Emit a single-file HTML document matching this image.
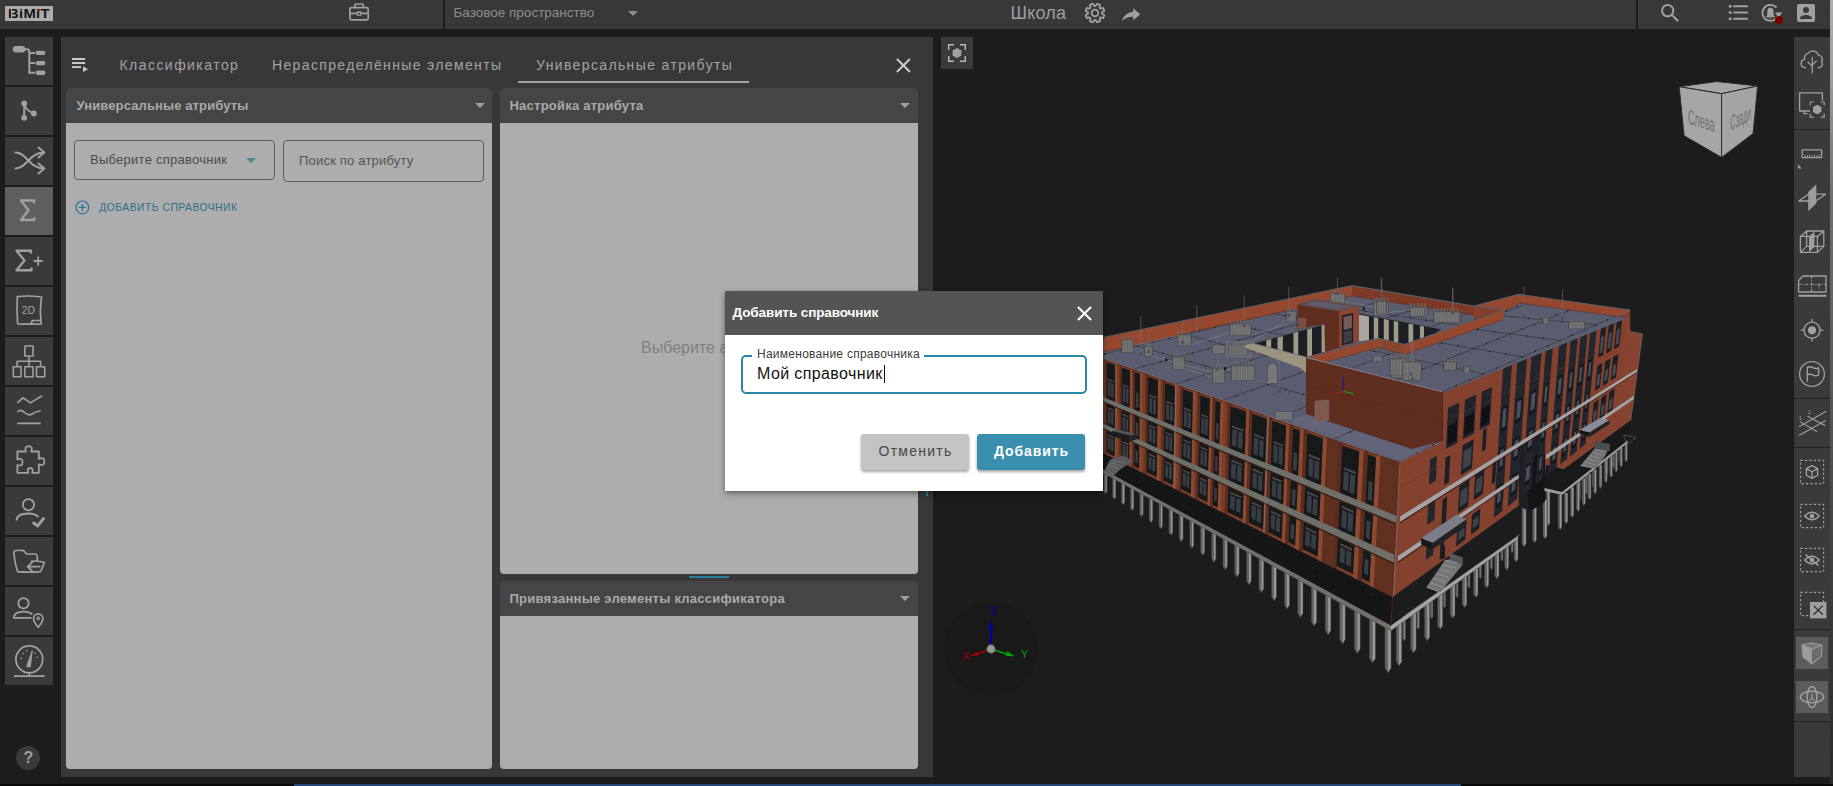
<!DOCTYPE html>
<html lang="ru">
<head>
<meta charset="utf-8">
<title>BIMIT</title>
<style>
html,body{margin:0;padding:0;}
body{width:1833px;height:786px;overflow:hidden;background:#1c1c1c;position:relative;font-family:"Liberation Sans",sans-serif;}
.abs{position:absolute;}
.t{position:absolute;white-space:nowrap;line-height:1;}
#topbar{left:0;top:0;width:1833px;height:29px;background:#383838;}
.vdiv{position:absolute;top:0;width:2px;height:29px;background:#1c1c1c;}
.sb{position:absolute;left:5px;width:48px;height:48px;background:#3a3a3a;}
.sb.act{background:#5f5f5f;}
.sb svg{position:absolute;left:0;top:0;width:48px;height:48px;}
#panel{left:61px;top:37px;width:872px;height:740px;background:#383838;}
.hdr{position:absolute;background:#454545;border-radius:4px 4px 0 0;}
.body{position:absolute;background:#adadad;border-radius:0 0 4px 4px;}
.tab{color:#a2a2a2;font-size:14px;letter-spacing:1.25px;}
.hd{color:#a9a9a9;font-size:13px;font-weight:bold;}
.tri{position:absolute;width:0;height:0;border-left:5px solid transparent;border-right:5px solid transparent;border-top:5px solid #9e9e9e;}
.rb{position:absolute;left:1794px;width:36px;}
</style>
</head>
<body>
<!-- TOPBAR -->
<div id="topbar" class="abs"></div>
<div class="vdiv" style="left:443px"></div>
<div class="vdiv" style="left:1636px"></div>
<div class="abs" id="logo" style="left:5px;top:6px;width:48px;height:15px;background:#ababab;"></div>
<span class="t" id="tx-logo" style="left:8.0px;top:7.55px;font-size:12px;font-weight:bold;color:#151515;letter-spacing:0.2px;transform-origin:0 0;transform:scaleX(1.24);">BiMiT</span>
<div class="abs" style="left:11.1px;top:8.8px;width:0.7px;height:9.2px;background:#ababab;"></div>
<div class="abs" style="left:37.9px;top:9.05px;width:2.2px;height:1.9px;background:#c00000;"></div>
<span class="t" id="tx-space" style="left:453.5px;top:5.7px;font-size:13.5px;color:#8c8c8c;">Базовое пространство</span>
<div class="tri" style="left:628px;top:11px;border-top-color:#8c8c8c;"></div>
<span class="t" id="tx-school" style="left:1010.5px;top:3.5px;font-size:18px;color:#9e9e9e;letter-spacing:0.2px;">Школа</span>

<div id="topicons">
<svg class="abs" style="left:345px;top:0px;width:28px;height:29px;" viewBox="345 0 28 29"><g fill="none" stroke="#a0a0a0" stroke-width="1.7" stroke-linejoin="round"><rect x="349.9" y="7.6" width="18.3" height="12.3" rx="1.6"/><path d="M354.8,7.6V5.6Q354.8,4 356.4,4H361.7Q363.3,4 363.3,5.6V7.6M350,13.4H357.3M360.9,13.4H368.2"/><rect x="357.4" y="12" width="3.4" height="3.2" stroke-width="1.3"/></g></svg>
<svg class="abs" style="left:1083px;top:0px;width:24px;height:29px;" viewBox="1083 0 24 29"><g fill="none" stroke="#a0a0a0" stroke-width="1.8" stroke-linejoin="round"><path d="M1101.97,13.65L1104.36,15.12L1103.12,18.12L1100.39,17.47L1099.47,18.39L1100.12,21.12L1097.12,22.36L1095.65,19.97L1094.35,19.97L1092.88,22.36L1089.88,21.12L1090.53,18.39L1089.61,17.47L1086.88,18.12L1085.64,15.12L1088.03,13.65L1088.03,12.35L1085.64,10.88L1086.88,7.88L1089.61,8.53L1090.53,7.61L1089.88,4.88L1092.88,3.64L1094.35,6.03L1095.65,6.03L1097.12,3.64L1100.12,4.88L1099.47,7.61L1100.39,8.53L1103.12,7.88L1104.36,10.88L1101.97,12.35Z"/><circle cx="1095" cy="13" r="3.3"/></g></svg>
<svg class="abs" style="left:1118.8px;top:4px;width:24.3px;height:20.4px;" viewBox="0 0 24 24" preserveAspectRatio="none"><path fill="#a0a0a0" d="M21,12L14,5V9C7,10 4,15 3,20C5.5,16.5 9,14.9 14,14.9V19L21,12Z"/></svg>
<svg class="abs" style="left:1658px;top:0.9px;width:24.5px;height:24.5px;" viewBox="0 0 24 24"><path fill="#a0a0a0" d="M9.5,3A6.5,6.5 0 0,1 16,9.5C16,11.11 15.41,12.59 14.44,13.73L14.71,14H15.5L20.5,19L19,20.5L14,15.5V14.71L13.73,14.44C12.59,15.41 11.11,16 9.5,16A6.5,6.5 0 0,1 3,9.5A6.5,6.5 0 0,1 9.5,3M9.5,5C7,5 5,7 5,9.5C5,12 7,14 9.5,14C12,14 14,12 14,9.5C14,7 12,5 9.5,5Z"/></svg>
<svg class="abs" style="left:1726px;top:0px;width:25px;height:25px;" viewBox="0 0 24 24"><path fill="#a0a0a0" d="M7,5H21V7H7V5M7,13V11H21V13H7M4,4.5A1.5,1.5 0 0,1 5.5,6A1.5,1.5 0 0,1 4,7.5A1.5,1.5 0 0,1 2.5,6A1.5,1.5 0 0,1 4,4.5M4,10.5A1.5,1.5 0 0,1 5.5,12A1.5,1.5 0 0,1 4,13.5A1.5,1.5 0 0,1 2.5,12A1.5,1.5 0 0,1 4,10.5M7,19V17H21V19H7M4,16.5A1.5,1.5 0 0,1 5.5,18A1.5,1.5 0 0,1 4,19.5A1.5,1.5 0 0,1 2.5,18A1.5,1.5 0 0,1 4,16.5Z"/></svg>
<svg class="abs" style="left:1758px;top:0px;width:30px;height:29px;" viewBox="1758 0 30 29"><g fill="none" stroke="#a0a0a0" stroke-width="1.9"><path d="M1778.3,14.5A8,8 0 1 1 1776.5,7.6"/></g><path fill="#a0a0a0" d="M1775,12.6H1782.4L1778.7,17.2Z"/><path fill="#a0a0a0" d="M1770.4,7.6Q1773.6,8 1773.6,12.2V15.2L1774.8,16.6V17.2H1766V16.6L1767.2,15.2V12.2Q1767.2,8 1770.4,7.6ZM1769.3,18H1771.5Q1771.4,19.1 1770.4,19.1Q1769.4,19.1 1769.3,18Z"/><circle cx="1779" cy="20" r="4" fill="#7b0000"/></svg>
<svg class="abs" style="left:1794px;top:0.8px;width:24px;height:24px;" viewBox="0 0 24 24"><path fill="#a0a0a0" d="M6,17C6,15 10,13.9 12,13.9C14,13.9 18,15 18,17V18H6M15,9A3,3 0 0,1 12,12A3,3 0 0,1 9,9A3,3 0 0,1 12,6A3,3 0 0,1 15,9M3,5V19A2,2 0 0,0 5,21H19A2,2 0 0,0 21,19V5A2,2 0 0,0 19,3H5C3.89,3 3,3.9 3,5Z"/></svg>
</div>
<!-- LEFT SIDEBAR -->
<div id="sidebar">
<div class="sb" style="top:37px"><svg viewBox="0 0 48 48" fill="none" stroke="#a0a0a0" stroke-width="2"><rect x="7.8" y="9" width="12.5" height="6.4" rx="3.2" fill="#a0a0a0" stroke="none"/><path d="M19,12.2H21.8Q24.3,12.2 24.3,14.7V35.7H30M24.3,15.9H30M24.3,26.1H30"/><rect x="30.6" y="13.7" width="9.8" height="4.4" rx="2.2" fill="#a0a0a0" stroke="none"/><rect x="30.6" y="23.9" width="9.8" height="4.4" rx="2.2" fill="#a0a0a0" stroke="none"/><rect x="30.6" y="33.5" width="9.8" height="4.4" rx="2.2" fill="#a0a0a0" stroke="none"/></svg></div>
<div class="sb" style="top:87px"><svg viewBox="0 0 48 48" fill="none" stroke="#a0a0a0" stroke-width="2"><path d="M19.2,16.3V30.8M19.2,16.5Q20,23 28.8,26.5"/><circle cx="19.2" cy="16.3" r="2.9" fill="#a0a0a0" stroke="none"/><circle cx="19.2" cy="30.8" r="2.9" fill="#a0a0a0" stroke="none"/><circle cx="28.8" cy="26.5" r="2.9" fill="#a0a0a0" stroke="none"/></svg></div>
<div class="sb" style="top:137px"><svg viewBox="0 0 48 48" fill="none" stroke="#a0a0a0" stroke-width="2"><path d="M10.5,15.5C22,15.5 24,31.5 39,31.5M10.5,31.5C22,31.5 24,15.5 39,15.5M33.5,10.5L39.3,15.5L33.5,20.5M33.5,26.5L39.3,31.5L33.5,36.5" stroke-linecap="round" stroke-linejoin="round"/></svg></div>
<div class="sb act" style="top:187px"><svg viewBox="0 0 48 48" fill="none" stroke="#a0a0a0" stroke-width="2"><path d="M29,15.5V13.5H16L23.5,23.2L16,33H29.3V31" stroke-width="2.4" stroke-linejoin="round" stroke-linecap="round"/></svg></div>
<div class="sb" style="top:237px"><svg viewBox="0 0 48 48" fill="none" stroke="#a0a0a0" stroke-width="2"><path d="M26,15.5V13.8H11.5L19.5,23.5L11.5,33.2H26.5V31.5" stroke-width="2.4" stroke-linejoin="round" stroke-linecap="round"/><path d="M33.2,19.5V28.5M28.7,24H37.7" stroke-width="1.8"/></svg></div>
<div class="sb" style="top:287px"><svg viewBox="0 0 48 48" fill="none" stroke="#a0a0a0" stroke-width="2"><path d="M12.3,9.6Q24,8.2 36.6,10Q34.5,24 36.3,36.8Q24,37.6 12.6,36.8Q11.6,23 12.3,9.6ZM26,36.5L27.5,33.5H35.5" stroke-width="1.7" stroke-linejoin="round"/><text x="23.3" y="27.2" font-size="10.4" text-anchor="middle" fill="#a0a0a0" stroke="none" font-family="Liberation Sans,sans-serif">2D</text></svg></div>
<div class="sb" style="top:337px"><svg viewBox="0 0 48 48" fill="none" stroke="#a0a0a0" stroke-width="2"><path d="M19.9,9H28V19H19.9ZM8.3,29.8H16V39.8H8.3ZM19.9,29.8H28V39.8H19.9ZM31.5,29.8H39.7V39.8H31.5ZM24,19V29.8M12.1,29.8V24.3H35.6V29.8" stroke-width="1.6" stroke-linejoin="round"/></svg></div>
<div class="sb" style="top:387px"><svg viewBox="0 0 48 48" fill="none" stroke="#a0a0a0" stroke-width="2"><path d="M12.3,15.9L17.9,10.8L25.5,15.9L37,8.8M12.3,24.8Q15,22.3 18,24.3Q24,29.3 27,27Q31,24.3 35.7,24M12.3,36.3H35.7" stroke-width="1.7" stroke-linejoin="round"/></svg></div>
<div class="sb" style="top:437px"><svg viewBox="0 0 48 48" fill="none" stroke="#a0a0a0" stroke-width="2"><path d="M21,14.5Q18.8,9.3 23.6,9.2Q28.4,9.3 26.2,14.5H33.8V21.8Q39.4,19.6 39.4,24.6Q39.4,29.6 33.8,27.4V35.8H27.2Q28.8,31 25.2,31Q21.6,31 23.2,35.8H12.4V28Q17.6,30 17.6,25Q17.6,20.4 12.4,22.4V14.5Z" stroke-width="1.8" stroke-linejoin="round"/></svg></div>
<div class="sb" style="top:487px"><svg viewBox="0 0 48 48" fill="none" stroke="#a0a0a0" stroke-width="2"><circle cx="23.5" cy="17.7" r="5.6" stroke-width="1.8"/><path d="M11.5,33.5Q11.8,26.5 23.5,26.5Q30,26.5 33.5,30" stroke-width="1.8"/><path d="M27.8,35.3L32.6,39L39.3,30.6" stroke-width="3" stroke-linejoin="miter"/></svg></div>
<div class="sb" style="top:537px"><svg viewBox="0 0 48 48" fill="none" stroke="#a0a0a0" stroke-width="2"><path d="M8.8,14.2Q13,12.7 18.5,13.6L21.5,17H30.5Q32,17.3 32.3,19.5V24.5M8.8,14.2Q9.5,26 12.8,34.6Q22,35.6 35.5,34.6Q38,30 39.3,25.6Q34,23.3 26,24.3" stroke-width="1.7" stroke-linejoin="round"/><path d="M35.5,29.7H23M27.5,25L22.7,29.7L27.5,34.4" stroke-width="1.8"/></svg></div>
<div class="sb" style="top:587px"><svg viewBox="0 0 48 48" fill="none" stroke="#a0a0a0" stroke-width="2"><circle cx="18.5" cy="16.3" r="5.2" stroke-width="1.8"/><path d="M8.6,31.5Q8.6,24.6 18.5,24.6Q24.5,24.6 27.3,27.4M8.6,30.8H26.5" stroke-width="1.8"/><path d="M33.2,40.3Q28.6,35 28.6,31.4A4.6,4.6 0 0 1 37.8,31.4Q37.8,35 33.2,40.3Z" stroke-width="1.7" stroke-linejoin="round"/><circle cx="33.2" cy="31.4" r="1.2" stroke-width="1.2"/></svg></div>
<div class="sb" style="top:637px"><svg viewBox="0 0 48 48" fill="none" stroke="#a0a0a0" stroke-width="2"><circle cx="24.3" cy="22.3" r="13.4" stroke-width="1.8"/><path d="M9,39.2H39.6M24.3,35.7V39" stroke-width="1.8"/><path d="M21.6,29.6L27.2,13.8L25.3,30Z" fill="#a0a0a0" stroke-width="1" stroke-linejoin="round"/><path d="M15.3,21L17,21.6M17.5,16L18.8,17M21.5,13L22,14.5M30.5,15.5L29.5,16.6M33,20L31.6,20.6" stroke-width="1.2"/></svg></div>
<div class="abs" style="left:16px;top:746px;width:24px;height:24px;border-radius:12px;background:#3a3a3a;"></div><span class="t" id="tx-help" style="left:23.4px;top:749.6px;font-size:16px;font-weight:bold;color:#a0a0a0;">?</span>
</div>

<!-- MAIN PANEL -->
<div id="panel" class="abs"></div>
<span class="t tab" id="tx-tab1" style="left:119.5px;top:58px;letter-spacing:1.45px;">Классификатор</span>
<span class="t tab" id="tx-tab2" style="left:272px;top:58px;letter-spacing:1.36px;">Нераспределённые элементы</span>
<span class="t tab" id="tx-tab3" style="left:536px;top:58px;letter-spacing:1.37px;">Универсальные атрибуты</span>
<div class="abs" style="left:518px;top:81px;width:231px;height:2px;background:#a2a2a2;"></div>

<!-- left sub-panel -->
<div class="hdr" style="left:66px;top:88px;width:426px;height:35px;"></div>
<div class="body" style="left:66px;top:123px;width:426px;height:646px;"></div>
<span class="t hd" id="tx-h1" style="left:76.5px;top:99px;letter-spacing:0.12px;">Универсальные атрибуты</span>
<div class="tri" style="left:475px;top:103px;"></div>
<div class="abs" style="left:74px;top:140px;width:199px;height:38px;border:1px solid #5e5e5e;border-radius:4px;"></div>
<div class="abs" style="left:283px;top:140px;width:199px;height:40px;border:1px solid #5e5e5e;border-radius:4px;"></div>
<span class="t" id="tx-sel" style="left:90px;top:153px;font-size:13px;color:#4c4c4c;letter-spacing:0.26px;">Выберите справочник</span>
<div class="tri" style="left:246px;top:158px;border-top-color:#4d8799;"></div>
<span class="t" id="tx-srch" style="left:299px;top:154px;font-size:13px;color:#555;letter-spacing:0.2px;">Поиск по атрибуту</span>
<span class="t" id="tx-add" style="left:99.2px;top:203px;font-size:10.3px;color:#2f6f88;letter-spacing:0.52px;">ДОБАВИТЬ СПРАВОЧНИК</span>

<!-- right sub-panels -->
<div class="hdr" style="left:500px;top:88px;width:418px;height:35px;"></div>
<div class="body" style="left:500px;top:123px;width:418px;height:451px;"></div>
<span class="t hd" id="tx-h2" style="left:509.5px;top:99px;letter-spacing:0.23px;">Настройка атрибута</span>
<div class="tri" style="left:900px;top:103px;"></div>
<span class="t" id="tx-pick" style="left:641px;top:340px;font-size:16px;color:#808080;">Выберите атрибут</span>
<div class="abs" style="left:689px;top:576px;width:40px;height:2px;background:#2a7f9c;"></div>
<div class="hdr" style="left:500px;top:581px;width:418px;height:35px;"></div>
<div class="body" style="left:500px;top:616px;width:418px;height:153px;"></div>
<span class="t hd" id="tx-h3" style="left:509.5px;top:591.6px;letter-spacing:0.25px;">Привязанные элементы классификатора</span>
<div class="tri" style="left:900px;top:596px;"></div>

<div id="panelicons">
<svg class="abs" style="left:70px;top:55px;width:20px;height:20px;" viewBox="70 55 20 20"><g fill="#c6c6c6"><rect x="72" y="58" width="13.1" height="2"/><rect x="72" y="62" width="13.1" height="2"/><rect x="72" y="66.1" width="9" height="1.9"/><path d="M83,66.2L88.1,69.2L83,72.1Z"/></g></svg>
<svg class="abs" style="left:891.2px;top:53.0px;width:24.8px;height:24.8px;" viewBox="0 0 24 24"><path fill="#cfcfcf" d="M19,6.41L17.59,5L12,10.59L6.41,5L5,6.41L10.59,12L5,17.59L6.41,19L12,13.41L17.59,19L19,17.59L13.41,12L19,6.41Z"/></svg>
<svg class="abs" style="left:73.6px;top:199.3px;width:16.8px;height:16.8px;" viewBox="0 0 24 24"><path fill="#2f7a96" d="M12,20C7.59,20 4,16.41 4,12C4,7.59 7.59,4 12,4C16.41,4 20,7.59 20,12C20,16.41 16.41,20 12,20M12,2A10,10 0 0,0 2,12A10,10 0 0,0 12,22A10,10 0 0,0 22,12A10,10 0 0,0 12,2M13,7H11V11H7V13H11V17H13V13H17V11H13V7Z"/></svg>
</div>
<!-- VIEWPORT -->
<div id="viewport">
<!--BUILDING--><svg class="abs" style="left:934px;top:29px;width:860px;height:751px" viewBox="934 29 860 751">
<path d="M1402.5,616.0V638.6L1404.0,641.0V616.0Z" fill="#5d5e5b"/>
<path d="M1405.5,616.0V638.6L1404.0,641.0V616.0Z" fill="#848583"/>
<path d="M1402.5,616.0V638.6L1404.0,641.0L1405.5,638.6V616.0" fill="none" stroke="#3a3b39" stroke-width="0.5"/>
<path d="M1416.5,605.6V627.3L1418.0,629.6V605.6Z" fill="#5d5e5b"/>
<path d="M1419.4,605.6V627.3L1418.0,629.6V605.6Z" fill="#848583"/>
<path d="M1416.5,605.6V627.3L1418.0,629.6L1419.4,627.3V605.6" fill="none" stroke="#3a3b39" stroke-width="0.5"/>
<path d="M1430.0,595.7V616.4L1431.4,618.6V595.7Z" fill="#5d5e5b"/>
<path d="M1432.9,595.7V616.4L1431.4,618.6V595.7Z" fill="#848583"/>
<path d="M1430.0,595.7V616.4L1431.4,618.6L1432.9,616.4V595.7" fill="none" stroke="#3a3b39" stroke-width="0.5"/>
<path d="M1443.0,586.1V605.9L1444.4,608.1V586.1Z" fill="#5d5e5b"/>
<path d="M1445.7,586.1V605.9L1444.4,608.1V586.1Z" fill="#848583"/>
<path d="M1443.0,586.1V605.9L1444.4,608.1L1445.7,605.9V586.1" fill="none" stroke="#3a3b39" stroke-width="0.5"/>
<path d="M1455.4,576.9V595.8L1456.8,598.0V576.9Z" fill="#5d5e5b"/>
<path d="M1458.1,576.9V595.8L1456.8,598.0V576.9Z" fill="#848583"/>
<path d="M1455.4,576.9V595.8L1456.8,598.0L1458.1,595.8V576.9" fill="none" stroke="#3a3b39" stroke-width="0.5"/>
<path d="M1467.4,568.1V586.2L1468.7,588.3V568.1Z" fill="#5d5e5b"/>
<path d="M1470.0,568.1V586.2L1468.7,588.3V568.1Z" fill="#848583"/>
<path d="M1467.4,568.1V586.2L1468.7,588.3L1470.0,586.2V568.1" fill="none" stroke="#3a3b39" stroke-width="0.5"/>
<path d="M1478.9,559.6V576.9L1480.2,578.9V559.6Z" fill="#5d5e5b"/>
<path d="M1481.5,559.6V576.9L1480.2,578.9V559.6Z" fill="#848583"/>
<path d="M1478.9,559.6V576.9L1480.2,578.9L1481.5,576.9V559.6" fill="none" stroke="#3a3b39" stroke-width="0.5"/>
<path d="M1490.0,551.4V567.9L1491.2,569.9V551.4Z" fill="#5d5e5b"/>
<path d="M1492.5,551.4V567.9L1491.2,569.9V551.4Z" fill="#848583"/>
<path d="M1490.0,551.4V567.9L1491.2,569.9L1492.5,567.9V551.4" fill="none" stroke="#3a3b39" stroke-width="0.5"/>
<path d="M1500.6,543.5V559.3L1501.8,561.3V543.5Z" fill="#5d5e5b"/>
<path d="M1503.0,543.5V559.3L1501.8,561.3V543.5Z" fill="#848583"/>
<path d="M1500.6,543.5V559.3L1501.8,561.3L1503.0,559.3V543.5" fill="none" stroke="#3a3b39" stroke-width="0.5"/>
<path d="M1510.8,536.0V551.1L1512.0,553.0V536.0Z" fill="#5d5e5b"/>
<path d="M1513.2,536.0V551.1L1512.0,553.0V536.0Z" fill="#848583"/>
<path d="M1510.8,536.0V551.1L1512.0,553.0L1513.2,551.1V536.0" fill="none" stroke="#3a3b39" stroke-width="0.5"/>
<path d="M1396.2,623.0V661.5L1399.0,666.0V623.0Z" fill="#646561"/>
<path d="M1401.8,623.0V661.5L1399.0,666.0V623.0Z" fill="#989997"/>
<path d="M1396.2,623.0V661.5L1399.0,666.0L1401.8,661.5V623.0" fill="none" stroke="#3a3b39" stroke-width="0.5"/>
<path d="M1410.7,612.1V648.9L1413.4,653.2V612.1Z" fill="#646561"/>
<path d="M1416.1,612.1V648.9L1413.4,653.2V612.1Z" fill="#989997"/>
<path d="M1410.7,612.1V648.9L1413.4,653.2L1416.1,648.9V612.1" fill="none" stroke="#3a3b39" stroke-width="0.5"/>
<path d="M1424.5,601.6V636.9L1427.1,641.0V601.6Z" fill="#646561"/>
<path d="M1429.7,601.6V636.9L1427.1,641.0V601.6Z" fill="#989997"/>
<path d="M1424.5,601.6V636.9L1427.1,641.0L1429.7,636.9V601.6" fill="none" stroke="#3a3b39" stroke-width="0.5"/>
<path d="M1437.6,591.7V625.4L1440.1,629.4V591.7Z" fill="#646561"/>
<path d="M1442.7,591.7V625.4L1440.1,629.4V591.7Z" fill="#989997"/>
<path d="M1437.6,591.7V625.4L1440.1,629.4L1442.7,625.4V591.7" fill="none" stroke="#3a3b39" stroke-width="0.5"/>
<path d="M1450.2,582.2V614.5L1452.6,618.4V582.2Z" fill="#646561"/>
<path d="M1455.0,582.2V614.5L1452.6,618.4V582.2Z" fill="#989997"/>
<path d="M1450.2,582.2V614.5L1452.6,618.4L1455.0,614.5V582.2" fill="none" stroke="#3a3b39" stroke-width="0.5"/>
<path d="M1462.1,573.2V604.1L1464.5,607.8V573.2Z" fill="#646561"/>
<path d="M1466.8,573.2V604.1L1464.5,607.8V573.2Z" fill="#989997"/>
<path d="M1462.1,573.2V604.1L1464.5,607.8L1466.8,604.1V573.2" fill="none" stroke="#3a3b39" stroke-width="0.5"/>
<path d="M1473.5,564.6V594.1L1475.8,597.8V564.6Z" fill="#646561"/>
<path d="M1478.0,564.6V594.1L1475.8,597.8V564.6Z" fill="#989997"/>
<path d="M1473.5,564.6V594.1L1475.8,597.8L1478.0,594.1V564.6" fill="none" stroke="#3a3b39" stroke-width="0.5"/>
<path d="M1484.4,556.4V584.6L1486.6,588.2V556.4Z" fill="#646561"/>
<path d="M1488.8,556.4V584.6L1486.6,588.2V556.4Z" fill="#989997"/>
<path d="M1484.4,556.4V584.6L1486.6,588.2L1488.8,584.6V556.4" fill="none" stroke="#3a3b39" stroke-width="0.5"/>
<path d="M1494.7,548.6V575.6L1496.8,579.0V548.6Z" fill="#646561"/>
<path d="M1499.0,548.6V575.6L1496.8,579.0V548.6Z" fill="#989997"/>
<path d="M1494.7,548.6V575.6L1496.8,579.0L1499.0,575.6V548.6" fill="none" stroke="#3a3b39" stroke-width="0.5"/>
<path d="M1504.6,541.1V567.0L1506.7,570.3V541.1Z" fill="#646561"/>
<path d="M1508.7,541.1V567.0L1506.7,570.3V541.1Z" fill="#989997"/>
<path d="M1504.6,541.1V567.0L1506.7,570.3L1508.7,567.0V541.1" fill="none" stroke="#3a3b39" stroke-width="0.5"/>
<path d="M1514.0,534.0V558.8L1516.0,562.0V534.0Z" fill="#646561"/>
<path d="M1518.0,534.0V558.8L1516.0,562.0V534.0Z" fill="#989997"/>
<path d="M1514.0,534.0V558.8L1516.0,562.0L1518.0,558.8V534.0" fill="none" stroke="#3a3b39" stroke-width="0.5"/>
<path d="M1570.7,485.0V505.9L1572.0,508.0V485.0Z" fill="#5d5e5b"/>
<path d="M1573.3,485.0V505.9L1572.0,508.0V485.0Z" fill="#848583"/>
<path d="M1570.7,485.0V505.9L1572.0,508.0L1573.3,505.9V485.0" fill="none" stroke="#3a3b39" stroke-width="0.5"/>
<path d="M1578.0,479.2V499.0L1579.2,501.0V479.2Z" fill="#5d5e5b"/>
<path d="M1580.5,479.2V499.0L1579.2,501.0V479.2Z" fill="#848583"/>
<path d="M1578.0,479.2V499.0L1579.2,501.0L1580.5,499.0V479.2" fill="none" stroke="#3a3b39" stroke-width="0.5"/>
<path d="M1585.1,473.6V492.2L1586.3,494.2V473.6Z" fill="#5d5e5b"/>
<path d="M1587.6,473.6V492.2L1586.3,494.2V473.6Z" fill="#848583"/>
<path d="M1585.1,473.6V492.2L1586.3,494.2L1587.6,492.2V473.6" fill="none" stroke="#3a3b39" stroke-width="0.5"/>
<path d="M1592.1,468.1V485.6L1593.3,487.5V468.1Z" fill="#5d5e5b"/>
<path d="M1594.5,468.1V485.6L1593.3,487.5V468.1Z" fill="#848583"/>
<path d="M1592.1,468.1V485.6L1593.3,487.5L1594.5,485.6V468.1" fill="none" stroke="#3a3b39" stroke-width="0.5"/>
<path d="M1599.0,462.6V479.1L1600.1,480.9V462.6Z" fill="#5d5e5b"/>
<path d="M1601.2,462.6V479.1L1600.1,480.9V462.6Z" fill="#848583"/>
<path d="M1599.0,462.6V479.1L1600.1,480.9L1601.2,479.1V462.6" fill="none" stroke="#3a3b39" stroke-width="0.5"/>
<path d="M1605.7,457.3V472.7L1606.8,474.5V457.3Z" fill="#5d5e5b"/>
<path d="M1607.9,457.3V472.7L1606.8,474.5V457.3Z" fill="#848583"/>
<path d="M1605.7,457.3V472.7L1606.8,474.5L1607.9,472.7V457.3" fill="none" stroke="#3a3b39" stroke-width="0.5"/>
<path d="M1612.2,452.1V466.5L1613.3,468.2V452.1Z" fill="#5d5e5b"/>
<path d="M1614.4,452.1V466.5L1613.3,468.2V452.1Z" fill="#848583"/>
<path d="M1612.2,452.1V466.5L1613.3,468.2L1614.4,466.5V452.1" fill="none" stroke="#3a3b39" stroke-width="0.5"/>
<path d="M1618.7,447.0V460.4L1619.7,462.0V447.0Z" fill="#5d5e5b"/>
<path d="M1620.8,447.0V460.4L1619.7,462.0V447.0Z" fill="#848583"/>
<path d="M1618.7,447.0V460.4L1619.7,462.0L1620.8,460.4V447.0" fill="none" stroke="#3a3b39" stroke-width="0.5"/>
<path d="M1625.0,442.0V454.4L1626.0,456.0V442.0Z" fill="#5d5e5b"/>
<path d="M1627.0,442.0V454.4L1626.0,456.0V442.0Z" fill="#848583"/>
<path d="M1625.0,442.0V454.4L1626.0,456.0L1627.0,454.4V442.0" fill="none" stroke="#3a3b39" stroke-width="0.5"/>
<path d="M1564.2,493.0V521.1L1566.0,524.0V493.0Z" fill="#646561"/>
<path d="M1567.8,493.0V521.1L1566.0,524.0V493.0Z" fill="#989997"/>
<path d="M1564.2,493.0V521.1L1566.0,524.0L1567.8,521.1V493.0" fill="none" stroke="#3a3b39" stroke-width="0.5"/>
<path d="M1570.3,488.1V515.0L1572.0,517.8V488.1Z" fill="#646561"/>
<path d="M1573.8,488.1V515.0L1572.0,517.8V488.1Z" fill="#989997"/>
<path d="M1570.3,488.1V515.0L1572.0,517.8L1573.8,515.0V488.1" fill="none" stroke="#3a3b39" stroke-width="0.5"/>
<path d="M1576.2,483.3V509.0L1577.9,511.7V483.3Z" fill="#646561"/>
<path d="M1579.6,483.3V509.0L1577.9,511.7V483.3Z" fill="#989997"/>
<path d="M1576.2,483.3V509.0L1577.9,511.7L1579.6,509.0V483.3" fill="none" stroke="#3a3b39" stroke-width="0.5"/>
<path d="M1582.1,478.5V503.1L1583.7,505.7V478.5Z" fill="#646561"/>
<path d="M1585.4,478.5V503.1L1583.7,505.7V478.5Z" fill="#989997"/>
<path d="M1582.1,478.5V503.1L1583.7,505.7L1585.4,503.1V478.5" fill="none" stroke="#3a3b39" stroke-width="0.5"/>
<path d="M1587.8,473.9V497.3L1589.4,499.8V473.9Z" fill="#646561"/>
<path d="M1591.0,473.9V497.3L1589.4,499.8V473.9Z" fill="#989997"/>
<path d="M1587.8,473.9V497.3L1589.4,499.8L1591.0,497.3V473.9" fill="none" stroke="#3a3b39" stroke-width="0.5"/>
<path d="M1593.4,469.4V491.6L1594.9,494.1V469.4Z" fill="#646561"/>
<path d="M1596.5,469.4V491.6L1594.9,494.1V469.4Z" fill="#989997"/>
<path d="M1593.4,469.4V491.6L1594.9,494.1L1596.5,491.6V469.4" fill="none" stroke="#3a3b39" stroke-width="0.5"/>
<path d="M1598.9,464.9V486.1L1600.4,488.5V464.9Z" fill="#646561"/>
<path d="M1601.9,464.9V486.1L1600.4,488.5V464.9Z" fill="#989997"/>
<path d="M1598.9,464.9V486.1L1600.4,488.5L1601.9,486.1V464.9" fill="none" stroke="#3a3b39" stroke-width="0.5"/>
<path d="M1604.2,460.6V480.6L1605.7,483.0V460.6Z" fill="#646561"/>
<path d="M1607.2,460.6V480.6L1605.7,483.0V460.6Z" fill="#989997"/>
<path d="M1604.2,460.6V480.6L1605.7,483.0L1607.2,480.6V460.6" fill="none" stroke="#3a3b39" stroke-width="0.5"/>
<path d="M1609.5,456.3V475.3L1610.9,477.6V456.3Z" fill="#646561"/>
<path d="M1612.4,456.3V475.3L1610.9,477.6V456.3Z" fill="#989997"/>
<path d="M1609.5,456.3V475.3L1610.9,477.6L1612.4,475.3V456.3" fill="none" stroke="#3a3b39" stroke-width="0.5"/>
<path d="M1614.7,452.1V470.1L1616.1,472.3V452.1Z" fill="#646561"/>
<path d="M1617.4,452.1V470.1L1616.1,472.3V452.1Z" fill="#989997"/>
<path d="M1614.7,452.1V470.1L1616.1,472.3L1617.4,470.1V452.1" fill="none" stroke="#3a3b39" stroke-width="0.5"/>
<path d="M1619.7,448.0V464.9L1621.1,467.1V448.0Z" fill="#646561"/>
<path d="M1622.4,448.0V464.9L1621.1,467.1V448.0Z" fill="#989997"/>
<path d="M1619.7,448.0V464.9L1621.1,467.1L1622.4,464.9V448.0" fill="none" stroke="#3a3b39" stroke-width="0.5"/>
<path d="M1624.7,444.0V459.9L1626.0,462.0V444.0Z" fill="#646561"/>
<path d="M1627.3,444.0V459.9L1626.0,462.0V444.0Z" fill="#989997"/>
<path d="M1624.7,444.0V459.9L1626.0,462.0L1627.3,459.9V444.0" fill="none" stroke="#3a3b39" stroke-width="0.5"/>
<path d="M1546.1,491.0V523.0L1548.0,526.0V491.0Z" fill="#646561"/>
<path d="M1549.9,491.0V523.0L1548.0,526.0V491.0Z" fill="#989997"/>
<path d="M1546.1,491.0V523.0L1548.0,526.0L1549.9,523.0V491.0" fill="none" stroke="#3a3b39" stroke-width="0.5"/>
<path d="M1558.1,495.0V527.0L1560.0,530.0V495.0Z" fill="#646561"/>
<path d="M1561.9,495.0V527.0L1560.0,530.0V495.0Z" fill="#989997"/>
<path d="M1558.1,495.0V527.0L1560.0,530.0L1561.9,527.0V495.0" fill="none" stroke="#3a3b39" stroke-width="0.5"/>
<path d="M1521.9,506.0V543.6L1524.0,547.0V506.0Z" fill="#646561"/>
<path d="M1526.1,506.0V543.6L1524.0,547.0V506.0Z" fill="#989997"/>
<path d="M1521.9,506.0V543.6L1524.0,547.0L1526.1,543.6V506.0" fill="none" stroke="#3a3b39" stroke-width="0.5"/>
<path d="M1532.5,503.0V539.7L1534.5,543.0V503.0Z" fill="#646561"/>
<path d="M1536.5,503.0V539.7L1534.5,543.0V503.0Z" fill="#989997"/>
<path d="M1532.5,503.0V539.7L1534.5,543.0L1536.5,539.7V503.0" fill="none" stroke="#3a3b39" stroke-width="0.5"/>
<path d="M1543.0,500.0V535.8L1545.0,539.0V500.0Z" fill="#646561"/>
<path d="M1547.0,500.0V535.8L1545.0,539.0V500.0Z" fill="#989997"/>
<path d="M1543.0,500.0V535.8L1545.0,539.0L1547.0,535.8V500.0" fill="none" stroke="#3a3b39" stroke-width="0.5"/>
<path d="M1103.9,472.0V491.4L1105.5,494.0V472.0Z" fill="#646561"/>
<path d="M1107.1,472.0V491.4L1105.5,494.0V472.0Z" fill="#989997"/>
<path d="M1103.9,472.0V491.4L1105.5,494.0L1107.1,491.4V472.0" fill="none" stroke="#3a3b39" stroke-width="0.5"/>
<path d="M1112.5,476.7V496.8L1114.1,499.5V476.7Z" fill="#646561"/>
<path d="M1115.8,476.7V496.8L1114.1,499.5V476.7Z" fill="#989997"/>
<path d="M1112.5,476.7V496.8L1114.1,499.5L1115.8,496.8V476.7" fill="none" stroke="#3a3b39" stroke-width="0.5"/>
<path d="M1121.3,481.6V502.4L1123.0,505.1V481.6Z" fill="#646561"/>
<path d="M1124.7,481.6V502.4L1123.0,505.1V481.6Z" fill="#989997"/>
<path d="M1121.3,481.6V502.4L1123.0,505.1L1124.7,502.4V481.6" fill="none" stroke="#3a3b39" stroke-width="0.5"/>
<path d="M1130.3,486.6V508.0L1132.1,510.8V486.6Z" fill="#646561"/>
<path d="M1133.8,486.6V508.0L1132.1,510.8V486.6Z" fill="#989997"/>
<path d="M1130.3,486.6V508.0L1132.1,510.8L1133.8,508.0V486.6" fill="none" stroke="#3a3b39" stroke-width="0.5"/>
<path d="M1139.6,491.7V513.9L1141.4,516.7V491.7Z" fill="#646561"/>
<path d="M1143.2,491.7V513.9L1141.4,516.7V491.7Z" fill="#989997"/>
<path d="M1139.6,491.7V513.9L1141.4,516.7L1143.2,513.9V491.7" fill="none" stroke="#3a3b39" stroke-width="0.5"/>
<path d="M1149.1,496.9V519.8L1150.9,522.8V496.9Z" fill="#646561"/>
<path d="M1152.8,496.9V519.8L1150.9,522.8V496.9Z" fill="#989997"/>
<path d="M1149.1,496.9V519.8L1150.9,522.8L1152.8,519.8V496.9" fill="none" stroke="#3a3b39" stroke-width="0.5"/>
<path d="M1158.9,502.3V526.0L1160.8,529.0V502.3Z" fill="#646561"/>
<path d="M1162.6,502.3V526.0L1160.8,529.0V502.3Z" fill="#989997"/>
<path d="M1158.9,502.3V526.0L1160.8,529.0L1162.6,526.0V502.3" fill="none" stroke="#3a3b39" stroke-width="0.5"/>
<path d="M1168.9,507.8V532.3L1170.8,535.4V507.8Z" fill="#646561"/>
<path d="M1172.8,507.8V532.3L1170.8,535.4V507.8Z" fill="#989997"/>
<path d="M1168.9,507.8V532.3L1170.8,535.4L1172.8,532.3V507.8" fill="none" stroke="#3a3b39" stroke-width="0.5"/>
<path d="M1179.1,513.5V538.7L1181.1,541.9V513.5Z" fill="#646561"/>
<path d="M1183.1,513.5V538.7L1181.1,541.9V513.5Z" fill="#989997"/>
<path d="M1179.1,513.5V538.7L1181.1,541.9L1183.1,538.7V513.5" fill="none" stroke="#3a3b39" stroke-width="0.5"/>
<path d="M1189.7,519.3V545.3L1191.7,548.6V519.3Z" fill="#646561"/>
<path d="M1193.8,519.3V545.3L1191.7,548.6V519.3Z" fill="#989997"/>
<path d="M1189.7,519.3V545.3L1191.7,548.6L1193.8,545.3V519.3" fill="none" stroke="#3a3b39" stroke-width="0.5"/>
<path d="M1200.5,525.3V552.1L1202.6,555.5V525.3Z" fill="#646561"/>
<path d="M1204.7,525.3V552.1L1202.6,555.5V525.3Z" fill="#989997"/>
<path d="M1200.5,525.3V552.1L1202.6,555.5L1204.7,552.1V525.3" fill="none" stroke="#3a3b39" stroke-width="0.5"/>
<path d="M1211.6,531.4V559.1L1213.8,562.6V531.4Z" fill="#646561"/>
<path d="M1215.9,531.4V559.1L1213.8,562.6V531.4Z" fill="#989997"/>
<path d="M1211.6,531.4V559.1L1213.8,562.6L1215.9,559.1V531.4" fill="none" stroke="#3a3b39" stroke-width="0.5"/>
<path d="M1223.0,537.7V566.3L1225.2,569.8V537.7Z" fill="#646561"/>
<path d="M1227.4,537.7V566.3L1225.2,569.8V537.7Z" fill="#989997"/>
<path d="M1223.0,537.7V566.3L1225.2,569.8L1227.4,566.3V537.7" fill="none" stroke="#3a3b39" stroke-width="0.5"/>
<path d="M1234.6,544.1V573.6L1236.9,577.3V544.1Z" fill="#646561"/>
<path d="M1239.2,544.1V573.6L1236.9,577.3V544.1Z" fill="#989997"/>
<path d="M1234.6,544.1V573.6L1236.9,577.3L1239.2,573.6V544.1" fill="none" stroke="#3a3b39" stroke-width="0.5"/>
<path d="M1246.6,550.7V581.1L1249.0,584.9V550.7Z" fill="#646561"/>
<path d="M1251.3,550.7V581.1L1249.0,584.9V550.7Z" fill="#989997"/>
<path d="M1246.6,550.7V581.1L1249.0,584.9L1251.3,581.1V550.7" fill="none" stroke="#3a3b39" stroke-width="0.5"/>
<path d="M1258.9,557.5V588.9L1261.3,592.7V557.5Z" fill="#646561"/>
<path d="M1263.8,557.5V588.9L1261.3,592.7V557.5Z" fill="#989997"/>
<path d="M1258.9,557.5V588.9L1261.3,592.7L1263.8,588.9V557.5" fill="none" stroke="#3a3b39" stroke-width="0.5"/>
<path d="M1271.5,564.5V596.8L1274.0,600.8V564.5Z" fill="#646561"/>
<path d="M1276.5,564.5V596.8L1274.0,600.8V564.5Z" fill="#989997"/>
<path d="M1271.5,564.5V596.8L1274.0,600.8L1276.5,596.8V564.5" fill="none" stroke="#3a3b39" stroke-width="0.5"/>
<path d="M1284.4,571.6V604.9L1287.0,609.0V571.6Z" fill="#646561"/>
<path d="M1289.6,571.6V604.9L1287.0,609.0V571.6Z" fill="#989997"/>
<path d="M1284.4,571.6V604.9L1287.0,609.0L1289.6,604.9V571.6" fill="none" stroke="#3a3b39" stroke-width="0.5"/>
<path d="M1297.7,578.9V613.2L1300.4,617.5V578.9Z" fill="#646561"/>
<path d="M1303.0,578.9V613.2L1300.4,617.5V578.9Z" fill="#989997"/>
<path d="M1297.7,578.9V613.2L1300.4,617.5L1303.0,613.2V578.9" fill="none" stroke="#3a3b39" stroke-width="0.5"/>
<path d="M1311.3,586.4V621.8L1314.0,626.1V586.4Z" fill="#646561"/>
<path d="M1316.7,586.4V621.8L1314.0,626.1V586.4Z" fill="#989997"/>
<path d="M1311.3,586.4V621.8L1314.0,626.1L1316.7,621.8V586.4" fill="none" stroke="#3a3b39" stroke-width="0.5"/>
<path d="M1325.3,594.1V630.6L1328.1,635.0V594.1Z" fill="#646561"/>
<path d="M1330.9,594.1V630.6L1328.1,635.0V594.1Z" fill="#989997"/>
<path d="M1325.3,594.1V630.6L1328.1,635.0L1330.9,630.6V594.1" fill="none" stroke="#3a3b39" stroke-width="0.5"/>
<path d="M1339.6,602.0V639.6L1342.5,644.2V602.0Z" fill="#646561"/>
<path d="M1345.3,602.0V639.6L1342.5,644.2V602.0Z" fill="#989997"/>
<path d="M1339.6,602.0V639.6L1342.5,644.2L1345.3,639.6V602.0" fill="none" stroke="#3a3b39" stroke-width="0.5"/>
<path d="M1354.3,610.1V648.8L1357.3,653.5V610.1Z" fill="#646561"/>
<path d="M1360.2,610.1V648.8L1357.3,653.5V610.1Z" fill="#989997"/>
<path d="M1354.3,610.1V648.8L1357.3,653.5L1360.2,648.8V610.1" fill="none" stroke="#3a3b39" stroke-width="0.5"/>
<path d="M1369.4,618.5V658.3L1372.4,663.1V618.5Z" fill="#646561"/>
<path d="M1375.5,618.5V658.3L1372.4,663.1V618.5Z" fill="#989997"/>
<path d="M1369.4,618.5V658.3L1372.4,663.1L1375.5,658.3V618.5" fill="none" stroke="#3a3b39" stroke-width="0.5"/>
<path d="M1384.9,627.0V668.0L1388.0,673.0V627.0Z" fill="#646561"/>
<path d="M1391.1,627.0V668.0L1388.0,673.0V627.0Z" fill="#989997"/>
<path d="M1384.9,627.0V668.0L1388.0,673.0L1391.1,668.0V627.0" fill="none" stroke="#3a3b39" stroke-width="0.5"/>
<polygon points="1103.0,453.0 1392.5,597.0 1391.0,625.5 1103.0,469.5" fill="#151717"/>
<polygon points="1103.0,469.5 1391.0,625.5 1391.0,630.7 1103.0,472.9" fill="#70716c"/>
<path d="M1103.0,472.9L1391.0,630.7" fill="none" stroke="#4a4b48" stroke-width="0.6"/>
<polygon points="1392.5,597.0 1518.8,505.5 1517.5,536.0 1391.0,625.5" fill="#1a1c1e"/>
<polygon points="1391.0,625.5 1517.5,536.0 1517.5,539.5 1391.0,630.7" fill="#a3a4a6"/>
<path d="M1391.0,630.7L1517.5,539.5" fill="none" stroke="#4a4b48" stroke-width="0.6"/>
<rect x="1136.7" y="477.4" width="2" height="2" fill="#0c0c0d"/>
<rect x="1188.6" y="504.2" width="2" height="2" fill="#0c0c0d"/>
<rect x="1252.2" y="537.1" width="2" height="2" fill="#0c0c0d"/>
<rect x="1315.7" y="570.0" width="2" height="2" fill="#0c0c0d"/>
<rect x="1367.7" y="596.9" width="2" height="2" fill="#0c0c0d"/>
<polygon points="1103.0,358.0 1400.0,461.8 1392.5,597.0 1103.0,453.0" fill="#7a3d28"/>
<polygon points="1323.1,434.9 1342.5,441.7 1336.5,569.1 1317.5,559.7" fill="#60301f"/>
<polygon points="1376.2,453.5 1400.0,461.8 1392.5,597.0 1369.3,585.5" fill="#60301f"/>
<polygon points="1115.0,362.2 1117.2,363.0 1116.9,459.9 1114.7,458.8" fill="#8c4a30"/>
<polygon points="1104.7,358.6 1106.7,359.3 1106.6,454.8 1104.6,453.8" fill="#5a2c1d"/>
<polygon points="1106.7,362.2 1115.0,365.1 1114.7,456.4 1106.6,452.4" fill="#15191a"/>
<polygon points="1108.0,381.5 1110.5,382.5 1110.4,396.7 1108.0,395.7" fill="#383d44"/>
<polygon points="1111.1,382.7 1113.6,383.7 1113.6,397.9 1111.1,396.9" fill="#383d44"/>
<polygon points="1107.8,378.6 1113.8,380.9 1113.8,382.6 1107.8,380.3" fill="#4e4446"/>
<polygon points="1108.0,410.3 1110.4,411.3 1110.4,423.9 1107.9,422.9" fill="#383d44"/>
<polygon points="1111.1,411.6 1113.5,412.6 1113.5,425.3 1111.0,424.2" fill="#383d44"/>
<polygon points="1107.8,407.3 1113.7,409.8 1113.7,411.5 1107.8,409.0" fill="#4e4446"/>
<polygon points="1107.9,437.0 1110.4,438.1 1110.3,449.9 1107.9,448.7" fill="#383d44"/>
<polygon points="1111.0,438.4 1113.5,439.6 1113.4,451.4 1111.0,450.2" fill="#383d44"/>
<polygon points="1107.8,434.0 1113.6,436.8 1113.6,438.5 1107.8,435.8" fill="#4e4446"/>
<polygon points="1130.0,367.4 1132.4,368.3 1131.6,467.2 1129.3,466.1" fill="#8c4a30"/>
<polygon points="1119.6,363.8 1121.7,364.5 1121.2,462.1 1119.2,461.0" fill="#5a2c1d"/>
<polygon points="1121.7,367.5 1130.0,370.4 1129.3,463.6 1121.2,459.6" fill="#15191a"/>
<polygon points="1122.9,387.2 1125.4,388.2 1125.3,402.6 1122.8,401.6" fill="#383d44"/>
<polygon points="1126.0,388.4 1128.5,389.4 1128.4,403.9 1126.0,402.9" fill="#383d44"/>
<polygon points="1122.8,384.2 1128.7,386.5 1128.7,388.3 1122.8,386.0" fill="#4e4446"/>
<polygon points="1122.8,416.6 1125.2,417.6 1125.1,430.5 1122.7,429.4" fill="#383d44"/>
<polygon points="1125.9,417.9 1128.3,418.9 1128.2,431.9 1125.8,430.8" fill="#383d44"/>
<polygon points="1122.6,413.6 1128.5,416.0 1128.5,417.8 1122.6,415.3" fill="#4e4446"/>
<polygon points="1122.6,443.9 1125.1,445.1 1125.0,457.1 1122.6,455.9" fill="#383d44"/>
<polygon points="1125.7,445.4 1128.1,446.5 1128.1,458.6 1125.6,457.4" fill="#383d44"/>
<polygon points="1122.5,440.9 1128.3,443.6 1128.3,445.4 1122.5,442.7" fill="#4e4446"/>
<polygon points="1140.0,370.9 1142.5,371.8 1141.5,472.1 1139.1,470.9" fill="#8c4a30"/>
<polygon points="1132.8,368.4 1135.0,369.2 1134.2,468.5 1132.0,467.4" fill="#5a2c1d"/>
<polygon points="1135.0,372.2 1140.0,373.9 1139.1,468.4 1134.2,466.0" fill="#15191a"/>
<polygon points="1136.1,392.2 1138.5,393.2 1138.4,407.9 1135.9,406.9" fill="#383d44"/>
<polygon points="1135.8,422.1 1138.3,423.2 1138.2,436.3 1135.7,435.2" fill="#383d44"/>
<polygon points="1135.6,450.0 1138.0,451.2 1137.9,463.3 1135.5,462.2" fill="#383d44"/>
<polygon points="1158.0,377.2 1160.6,378.1 1159.1,480.9 1156.6,479.7" fill="#8c4a30"/>
<polygon points="1145.7,372.9 1148.0,373.7 1146.9,474.8 1144.6,473.7" fill="#5a2c1d"/>
<polygon points="1148.0,376.8 1158.0,380.3 1156.6,477.1 1146.9,472.3" fill="#15191a"/>
<polygon points="1149.3,397.3 1152.3,398.4 1152.1,413.4 1149.2,412.2" fill="#383d44"/>
<polygon points="1153.1,398.7 1156.1,399.9 1155.9,414.9 1152.9,413.7" fill="#383d44"/>
<polygon points="1149.2,394.2 1156.3,396.9 1156.3,398.7 1149.1,396.0" fill="#4e4446"/>
<polygon points="1149.0,427.7 1151.9,429.0 1151.8,442.4 1148.8,441.1" fill="#383d44"/>
<polygon points="1152.7,429.3 1155.7,430.6 1155.5,444.1 1152.6,442.8" fill="#383d44"/>
<polygon points="1148.8,424.6 1155.9,427.6 1155.9,429.4 1148.8,426.4" fill="#4e4446"/>
<polygon points="1148.6,456.2 1151.6,457.6 1151.4,469.9 1148.5,468.5" fill="#383d44"/>
<polygon points="1152.4,458.0 1155.3,459.3 1155.1,471.7 1152.2,470.3" fill="#383d44"/>
<polygon points="1148.5,453.1 1155.5,456.4 1155.5,458.2 1148.5,454.9" fill="#4e4446"/>
<polygon points="1175.0,383.2 1177.7,384.1 1175.8,489.2 1173.2,487.9" fill="#8c4a30"/>
<polygon points="1162.6,378.8 1165.0,379.7 1163.4,483.1 1161.0,481.9" fill="#5a2c1d"/>
<polygon points="1165.0,382.8 1174.9,386.3 1173.2,485.3 1163.5,480.5" fill="#15191a"/>
<polygon points="1166.2,403.7 1169.2,404.9 1169.0,420.1 1166.0,418.9" fill="#383d44"/>
<polygon points="1170.0,405.2 1173.0,406.3 1172.7,421.6 1169.8,420.4" fill="#383d44"/>
<polygon points="1166.1,400.5 1173.2,403.2 1173.2,405.1 1166.1,402.4" fill="#4e4446"/>
<polygon points="1165.8,434.9 1168.7,436.1 1168.5,449.9 1165.5,448.6" fill="#383d44"/>
<polygon points="1169.5,436.5 1172.5,437.7 1172.2,451.5 1169.3,450.2" fill="#383d44"/>
<polygon points="1165.6,431.7 1172.7,434.7 1172.7,436.5 1165.6,433.5" fill="#4e4446"/>
<polygon points="1165.3,464.1 1168.2,465.5 1168.0,478.0 1165.1,476.6" fill="#383d44"/>
<polygon points="1169.0,465.8 1172.0,467.2 1171.7,479.8 1168.8,478.4" fill="#383d44"/>
<polygon points="1165.2,460.9 1172.2,464.2 1172.2,466.1 1165.1,462.8" fill="#4e4446"/>
<polygon points="1193.0,389.4 1195.9,390.4 1193.5,498.0 1190.7,496.6" fill="#8c4a30"/>
<polygon points="1180.4,385.0 1183.0,385.9 1181.0,491.8 1178.5,490.5" fill="#5a2c1d"/>
<polygon points="1182.9,389.1 1192.9,392.7 1190.8,494.0 1181.0,489.1" fill="#15191a"/>
<polygon points="1184.1,410.5 1187.1,411.7 1186.8,427.2 1183.8,426.0" fill="#383d44"/>
<polygon points="1187.9,412.0 1190.9,413.1 1190.6,428.8 1187.6,427.6" fill="#383d44"/>
<polygon points="1184.0,407.3 1191.2,410.0 1191.1,411.9 1184.0,409.2" fill="#4e4446"/>
<polygon points="1183.5,442.4 1186.5,443.7 1186.2,457.8 1183.2,456.4" fill="#383d44"/>
<polygon points="1187.3,444.0 1190.2,445.3 1189.9,459.4 1187.0,458.1" fill="#383d44"/>
<polygon points="1183.4,439.1 1190.5,442.1 1190.4,444.1 1183.3,441.1" fill="#4e4446"/>
<polygon points="1182.9,472.4 1185.9,473.8 1185.6,486.6 1182.7,485.1" fill="#383d44"/>
<polygon points="1186.7,474.2 1189.6,475.6 1189.3,488.4 1186.4,486.9" fill="#383d44"/>
<polygon points="1182.8,469.2 1189.9,472.4 1189.8,474.4 1182.8,471.1" fill="#4e4446"/>
<polygon points="1210.0,395.4 1213.0,396.4 1210.2,506.3 1207.3,504.9" fill="#8c4a30"/>
<polygon points="1197.8,391.1 1200.5,392.1 1198.0,500.3 1195.4,499.0" fill="#5a2c1d"/>
<polygon points="1200.4,395.3 1209.9,398.7 1207.4,502.1 1198.1,497.6" fill="#15191a"/>
<polygon points="1201.5,417.1 1204.3,418.2 1203.9,434.1 1201.1,433.0" fill="#383d44"/>
<polygon points="1205.0,418.5 1207.9,419.6 1207.5,435.5 1204.7,434.4" fill="#383d44"/>
<polygon points="1201.3,413.8 1208.1,416.4 1208.1,418.3 1201.3,415.7" fill="#4e4446"/>
<polygon points="1200.7,449.7 1203.5,450.9 1203.2,465.3 1200.4,464.1" fill="#383d44"/>
<polygon points="1204.3,451.2 1207.1,452.4 1206.7,466.9 1203.9,465.7" fill="#383d44"/>
<polygon points="1200.6,446.4 1207.3,449.2 1207.3,451.2 1200.5,448.3" fill="#4e4446"/>
<polygon points="1200.0,480.5 1202.8,481.8 1202.5,494.8 1199.7,493.4" fill="#383d44"/>
<polygon points="1203.5,482.2 1206.3,483.5 1206.0,496.5 1203.2,495.1" fill="#383d44"/>
<polygon points="1199.9,477.2 1206.6,480.3 1206.5,482.2 1199.8,479.1" fill="#4e4446"/>
<polygon points="1220.6,399.1 1223.7,400.2 1220.7,511.5 1217.6,510.0" fill="#8c4a30"/>
<polygon points="1212.8,396.3 1215.6,397.3 1212.8,507.6 1210.0,506.2" fill="#5a2c1d"/>
<polygon points="1215.5,400.6 1220.5,402.4 1217.7,507.2 1212.8,504.8" fill="#15191a"/>
<polygon points="1216.2,422.7 1218.7,423.7 1218.3,439.8 1215.8,438.8" fill="#383d44"/>
<polygon points="1215.3,455.9 1217.8,457.0 1217.4,471.7 1215.0,470.6" fill="#383d44"/>
<polygon points="1214.5,487.4 1217.0,488.5 1216.6,501.7 1214.2,500.5" fill="#383d44"/>
<polygon points="1246.2,408.0 1249.5,409.2 1245.8,524.0 1242.6,522.5" fill="#8c4a30"/>
<polygon points="1227.7,401.5 1230.6,402.6 1227.4,514.9 1224.5,513.4" fill="#5a2c1d"/>
<polygon points="1230.5,405.9 1246.1,411.5 1242.7,519.6 1227.5,512.1" fill="#15191a"/>
<polygon points="1232.4,428.9 1237.0,430.6 1236.5,447.1 1231.9,445.3" fill="#383d44"/>
<polygon points="1238.3,431.1 1242.9,432.9 1242.4,449.5 1237.8,447.6" fill="#383d44"/>
<polygon points="1232.1,425.4 1243.4,429.6 1243.3,431.7 1232.1,427.4" fill="#4e4446"/>
<polygon points="1231.4,462.8 1236.0,464.7 1235.6,479.8 1230.9,477.7" fill="#383d44"/>
<polygon points="1237.2,465.3 1241.9,467.2 1241.4,482.4 1236.8,480.3" fill="#383d44"/>
<polygon points="1231.2,459.3 1242.3,463.9 1242.2,466.0 1231.1,461.3" fill="#4e4446"/>
<polygon points="1230.4,494.9 1235.0,497.1 1234.6,510.4 1230.0,508.2" fill="#383d44"/>
<polygon points="1236.3,497.7 1240.9,499.8 1240.4,513.3 1235.9,511.0" fill="#383d44"/>
<polygon points="1230.2,491.4 1241.3,496.5 1241.2,498.6 1230.2,493.4" fill="#4e4446"/>
<polygon points="1267.0,415.3 1270.5,416.5 1266.2,534.2 1262.9,532.5" fill="#8c4a30"/>
<polygon points="1249.4,409.1 1252.5,410.2 1248.7,525.5 1245.7,524.0" fill="#5a2c1d"/>
<polygon points="1252.4,413.7 1266.9,418.8 1263.0,529.6 1248.8,522.6" fill="#15191a"/>
<polygon points="1254.0,437.1 1258.3,438.7 1257.7,455.6 1253.4,453.9" fill="#383d44"/>
<polygon points="1259.4,439.2 1263.8,440.8 1263.2,457.8 1258.9,456.1" fill="#383d44"/>
<polygon points="1253.8,433.5 1264.2,437.4 1264.1,439.5 1253.7,435.6" fill="#4e4446"/>
<polygon points="1252.8,471.9 1257.1,473.7 1256.6,489.2 1252.3,487.3" fill="#383d44"/>
<polygon points="1258.2,474.2 1262.5,476.0 1262.0,491.6 1257.7,489.7" fill="#383d44"/>
<polygon points="1252.6,468.3 1262.9,472.6 1262.9,474.7 1252.6,470.4" fill="#4e4446"/>
<polygon points="1251.7,505.0 1256.0,507.0 1255.5,520.6 1251.3,518.5" fill="#383d44"/>
<polygon points="1257.1,507.5 1261.4,509.5 1260.9,523.2 1256.6,521.1" fill="#383d44"/>
<polygon points="1251.5,501.4 1261.8,506.2 1261.7,508.3 1251.5,503.5" fill="#4e4446"/>
<polygon points="1286.2,422.0 1289.9,423.3 1285.2,543.6 1281.6,541.8" fill="#8c4a30"/>
<polygon points="1269.2,416.1 1272.5,417.2 1268.2,535.2 1265.0,533.6" fill="#5a2c1d"/>
<polygon points="1272.4,420.7 1286.1,425.6 1281.7,538.9 1268.3,532.2" fill="#15191a"/>
<polygon points="1273.7,444.6 1277.8,446.2 1277.2,463.4 1273.1,461.7" fill="#383d44"/>
<polygon points="1278.9,446.6 1283.0,448.1 1282.4,465.5 1278.3,463.8" fill="#383d44"/>
<polygon points="1273.6,440.9 1283.4,444.7 1283.3,446.8 1273.5,443.1" fill="#4e4446"/>
<polygon points="1272.4,480.2 1276.5,482.0 1275.9,497.8 1271.8,496.0" fill="#383d44"/>
<polygon points="1277.6,482.4 1281.6,484.1 1281.0,500.1 1277.0,498.3" fill="#383d44"/>
<polygon points="1272.3,476.6 1282.1,480.7 1282.0,482.8 1272.2,478.7" fill="#4e4446"/>
<polygon points="1271.2,514.2 1275.2,516.1 1274.7,529.9 1270.7,528.0" fill="#383d44"/>
<polygon points="1276.3,516.6 1280.3,518.5 1279.8,532.4 1275.8,530.5" fill="#383d44"/>
<polygon points="1271.0,510.6 1280.7,515.1 1280.7,517.2 1271.0,512.7" fill="#4e4446"/>
<polygon points="1300.0,426.8 1303.8,428.1 1298.7,550.4 1295.0,548.5" fill="#8c4a30"/>
<polygon points="1289.7,423.2 1293.1,424.4 1288.3,545.2 1285.0,543.5" fill="#5a2c1d"/>
<polygon points="1293.0,428.0 1299.9,430.5 1295.1,545.5 1288.4,542.2" fill="#15191a"/>
<polygon points="1293.7,452.2 1297.2,453.5 1296.5,471.1 1293.0,469.7" fill="#383d44"/>
<polygon points="1292.3,488.7 1295.7,490.1 1295.0,506.3 1291.6,504.8" fill="#383d44"/>
<polygon points="1290.9,523.6 1294.3,525.1 1293.7,539.2 1290.3,537.5" fill="#383d44"/>
<polygon points="1323.1,434.9 1327.0,436.3 1321.4,561.6 1317.5,559.7" fill="#8c4a30"/>
<polygon points="1304.0,428.2 1307.5,429.4 1302.3,552.2 1298.9,550.4" fill="#5a2c1d"/>
<polygon points="1307.3,433.1 1322.9,438.6 1317.7,556.6 1302.5,549.1" fill="#15191a"/>
<polygon points="1308.8,457.9 1313.5,459.7 1312.7,477.6 1308.1,475.7" fill="#383d44"/>
<polygon points="1314.7,460.2 1319.4,461.9 1318.6,479.9 1313.9,478.1" fill="#383d44"/>
<polygon points="1308.7,454.1 1319.8,458.3 1319.7,460.6 1308.6,456.3" fill="#4e4446"/>
<polygon points="1307.2,495.0 1311.9,497.0 1311.2,513.5 1306.5,511.5" fill="#383d44"/>
<polygon points="1313.1,497.5 1317.7,499.5 1317.0,516.1 1312.4,514.1" fill="#383d44"/>
<polygon points="1307.1,491.2 1318.2,495.9 1318.1,498.1 1307.0,493.4" fill="#4e4446"/>
<polygon points="1305.7,530.6 1310.3,532.8 1309.7,547.0 1305.1,544.7" fill="#383d44"/>
<polygon points="1311.5,533.4 1316.1,535.5 1315.5,549.8 1310.9,547.6" fill="#383d44"/>
<polygon points="1305.6,526.8 1316.6,531.9 1316.5,534.2 1305.5,529.0" fill="#4e4446"/>
<polygon points="1359.4,447.6 1363.6,449.0 1357.0,579.4 1352.9,577.3" fill="#8c4a30"/>
<polygon points="1338.7,440.3 1342.5,441.7 1336.5,569.1 1332.8,567.3" fill="#5a2c1d"/>
<polygon points="1342.3,445.5 1359.2,451.5 1353.1,574.1 1336.6,565.9" fill="#15191a"/>
<polygon points="1343.8,471.2 1348.9,473.1 1348.0,491.6 1343.0,489.6" fill="#383d44"/>
<polygon points="1350.2,473.7 1355.3,475.6 1354.3,494.2 1349.3,492.2" fill="#383d44"/>
<polygon points="1343.7,467.3 1355.8,471.8 1355.7,474.2 1343.6,469.6" fill="#4e4446"/>
<polygon points="1342.0,509.8 1347.0,511.9 1346.2,529.1 1341.2,526.9" fill="#383d44"/>
<polygon points="1348.3,512.5 1353.3,514.6 1352.5,531.9 1347.5,529.7" fill="#383d44"/>
<polygon points="1341.8,505.8 1353.9,510.9 1353.7,513.2 1341.7,508.1" fill="#4e4446"/>
<polygon points="1340.2,547.0 1345.2,549.3 1344.5,563.9 1339.5,561.5" fill="#383d44"/>
<polygon points="1346.5,550.0 1351.5,552.3 1350.7,566.9 1345.8,564.5" fill="#383d44"/>
<polygon points="1340.1,543.0 1352.0,548.6 1351.9,550.9 1340.0,545.3" fill="#4e4446"/>
<polygon points="1376.2,453.5 1380.7,455.0 1373.7,587.6 1369.3,585.5" fill="#8c4a30"/>
<polygon points="1364.1,449.2 1368.1,450.6 1361.4,581.5 1357.5,579.6" fill="#5a2c1d"/>
<polygon points="1367.9,454.5 1376.0,457.4 1369.5,582.2 1361.6,578.3" fill="#15191a"/>
<polygon points="1368.6,480.6 1372.7,482.2 1371.7,501.1 1367.7,499.5" fill="#383d44"/>
<polygon points="1366.6,520.2 1370.6,522.0 1369.7,539.6 1365.7,537.8" fill="#383d44"/>
<polygon points="1364.6,558.6 1368.6,560.5 1367.8,575.3 1363.9,573.3" fill="#383d44"/>
<polygon points="1103.0,397.0 1397.0,516.0 1396.6,523.3 1103.0,401.5" fill="#6e6f69"/>
<polygon points="1103.0,423.5 1394.8,555.0 1394.4,563.0 1103.0,428.0" fill="#6e6f69"/>
<polygon points="1103.0,401.5 1396.6,523.3 1396.5,524.9 1103.0,402.6" fill="#3a2018"/>
<polygon points="1103.0,428.0 1394.4,563.0 1394.3,564.6 1103.0,429.1" fill="#3a2018"/>
<path d="M1103.0,358.0L1400.0,461.8" fill="none" stroke="#85868e" stroke-width="1.0"/>
<path d="M1103.0,359.2L1400.0,463.1" fill="none" stroke="#5a2a1a" stroke-width="0.8"/>
<path d="M1175.8,383.4L1173.9,488.3" fill="none" stroke="#77787a" stroke-width="0.7"/>
<path d="M1268.1,415.7L1264.0,533.1" fill="none" stroke="#77787a" stroke-width="0.7"/>
<polygon points="1112.0,431.0 1118.0,429.6 1136.5,434.2 1130.5,435.6" fill="#55565c"/>
<polygon points="1112.0,431.0 1130.5,435.6 1130.5,441.2 1112.0,436.6" fill="#1b1c1d"/>
<polygon points="1130.5,435.6 1136.5,434.2 1136.5,439.6 1130.5,441.2" fill="#242527"/>
<polygon points="1104.5,470.0 1110.0,459.5 1123.0,455.6 1133.0,461.0 1121.0,469.0 1112.0,477.0" fill="#58595b"/>
<path d="M1106.0,469.0L1114.0,475.0" fill="none" stroke="#8e8f92" stroke-width="0.5"/>
<path d="M1107.5,466.8L1116.5,472.0" fill="none" stroke="#8e8f92" stroke-width="0.5"/>
<path d="M1109.0,464.5L1119.0,469.0" fill="none" stroke="#8e8f92" stroke-width="0.5"/>
<path d="M1110.5,462.2L1121.5,466.0" fill="none" stroke="#8e8f92" stroke-width="0.5"/>
<path d="M1112.0,460.0L1124.0,463.0" fill="none" stroke="#8e8f92" stroke-width="0.5"/>
<polygon points="1400.0,461.8 1442.5,441.0 1442.5,391.8 1630.0,310.0 1630.7,420.5 1563.5,469.5 1546.0,465.0 1545.0,486.0 1518.8,505.5 1392.5,597.0" fill="#84422e"/>
<polygon points="1518.8,446.0 1545.0,430.0 1545.0,500.0 1530.0,512.0 1518.8,505.5" fill="#1d1f22"/>
<polygon points="1528.5,460.0 1545.0,450.0 1545.0,502.0 1528.5,512.0" fill="#121416"/>
<polygon points="1546.0,465.0 1563.5,469.5 1630.7,420.5 1627.6,440.4 1562.0,492.0 1544.4,488.0" fill="#17191b"/>
<polygon points="1544.4,488.0 1562.0,492.0 1627.6,440.4 1627.6,443.0 1562.0,495.0 1544.4,491.0" fill="#9a9b9d"/>
<polygon points="1627.5,331.0 1642.5,334.0 1630.7,420.5 1618.0,417.0" fill="#86432f"/>
<path d="M1627.5,331.0L1642.5,334.0L1630.7,420.5" fill="none" stroke="#6a6b6e" stroke-width="0.7"/>
<polygon points="1503.1,368.3 1511.9,364.4 1502.3,511.1 1493.6,518.0" fill="#22262c"/>
<polygon points="1502.5,407.0 1507.4,404.4 1505.7,429.9 1500.8,432.9" fill="#14171b"/>
<polygon points="1503.0,409.6 1506.4,407.8 1505.3,425.9 1501.9,427.9" fill="#4a4f5a"/>
<polygon points="1499.9,448.1 1504.8,445.0 1503.2,469.0 1498.3,472.4" fill="#14171b"/>
<polygon points="1500.4,450.6 1503.8,448.4 1502.7,465.0 1499.4,467.3" fill="#4a4f5a"/>
<polygon points="1497.5,486.1 1502.3,482.6 1500.8,505.1 1496.0,508.9" fill="#14171b"/>
<polygon points="1498.0,488.6 1501.4,486.1 1500.4,501.2 1497.0,503.8" fill="#4a4f5a"/>
<polygon points="1517.3,362.0 1527.0,357.7 1517.2,499.1 1507.6,506.8" fill="#22262c"/>
<polygon points="1516.9,399.3 1522.3,396.4 1520.6,421.0 1515.2,424.3" fill="#14171b"/>
<polygon points="1517.4,401.8 1521.3,399.7 1520.1,417.1 1516.2,419.4" fill="#4a4f5a"/>
<polygon points="1514.2,439.0 1519.6,435.5 1518.0,458.7 1512.6,462.5" fill="#14171b"/>
<polygon points="1514.7,441.4 1518.6,438.9 1517.5,454.9 1513.6,457.6" fill="#4a4f5a"/>
<polygon points="1511.7,475.7 1517.1,471.8 1515.6,493.5 1510.2,497.8" fill="#14171b"/>
<polygon points="1512.2,478.1 1516.1,475.2 1515.1,489.8 1511.2,492.8" fill="#4a4f5a"/>
<polygon points="1531.5,355.7 1541.5,351.3 1531.3,487.7 1521.6,495.6" fill="#22262c"/>
<polygon points="1531.1,391.6 1536.6,388.7 1534.9,412.4 1529.3,415.8" fill="#14171b"/>
<polygon points="1531.6,394.1 1535.7,391.9 1534.4,408.7 1530.4,411.1" fill="#4a4f5a"/>
<polygon points="1528.3,430.0 1533.8,426.4 1532.2,448.8 1526.7,452.7" fill="#14171b"/>
<polygon points="1528.9,432.3 1532.9,429.7 1531.7,445.1 1527.7,447.9" fill="#4a4f5a"/>
<polygon points="1525.8,465.4 1531.3,461.4 1529.7,482.4 1524.2,486.7" fill="#14171b"/>
<polygon points="1526.3,467.7 1530.3,464.8 1529.3,478.8 1525.3,481.9" fill="#4a4f5a"/>
<polygon points="1545.8,349.4 1552.9,346.2 1542.6,478.7 1535.6,484.3" fill="#22262c"/>
<polygon points="1544.6,384.3 1548.6,382.2 1546.8,405.3 1542.9,407.6" fill="#14171b"/>
<polygon points="1545.2,386.7 1547.7,385.3 1546.4,401.6 1543.9,403.1" fill="#4a4f5a"/>
<polygon points="1541.8,421.4 1545.8,418.8 1544.1,440.6 1540.1,443.3" fill="#14171b"/>
<polygon points="1542.3,423.6 1544.8,422.0 1543.7,437.0 1541.2,438.7" fill="#4a4f5a"/>
<polygon points="1539.2,455.6 1543.1,452.8 1541.5,473.1 1537.6,476.2" fill="#14171b"/>
<polygon points="1539.7,457.8 1542.2,456.0 1541.1,469.6 1538.7,471.5" fill="#4a4f5a"/>
<polygon points="1559.3,343.4 1567.3,339.8 1556.7,467.3 1548.8,473.6" fill="#22262c"/>
<polygon points="1558.3,377.0 1562.8,374.6 1560.9,396.8 1556.5,399.5" fill="#14171b"/>
<polygon points="1558.8,379.2 1561.8,377.6 1560.5,393.3 1557.5,395.1" fill="#4a4f5a"/>
<polygon points="1555.4,412.7 1559.8,409.9 1558.1,430.8 1553.7,433.9" fill="#14171b"/>
<polygon points="1555.9,414.9 1558.9,413.0 1557.7,427.4 1554.7,429.4" fill="#4a4f5a"/>
<polygon points="1552.7,445.8 1557.1,442.5 1555.5,462.1 1551.1,465.6" fill="#14171b"/>
<polygon points="1553.2,447.9 1556.2,445.7 1555.1,458.8 1552.2,461.1" fill="#4a4f5a"/>
<polygon points="1570.9,338.2 1578.0,335.1 1567.2,458.8 1560.2,464.5" fill="#22262c"/>
<polygon points="1569.6,370.9 1573.6,368.8 1571.7,390.3 1567.8,392.7" fill="#14171b"/>
<polygon points="1570.2,373.1 1572.6,371.7 1571.3,387.0 1568.8,388.4" fill="#4a4f5a"/>
<polygon points="1566.7,405.5 1570.6,403.0 1568.9,423.3 1564.9,426.0" fill="#14171b"/>
<polygon points="1567.2,407.6 1569.7,406.0 1568.5,420.0 1566.0,421.7" fill="#4a4f5a"/>
<polygon points="1563.9,437.6 1567.9,434.7 1566.2,453.7 1562.3,456.8" fill="#14171b"/>
<polygon points="1564.5,439.6 1566.9,437.8 1565.8,450.5 1563.4,452.4" fill="#4a4f5a"/>
<polygon points="1580.7,333.9 1587.8,330.8 1576.8,451.2 1569.8,456.8" fill="#22262c"/>
<polygon points="1579.3,365.7 1583.3,363.5 1581.4,384.5 1577.4,386.9" fill="#14171b"/>
<polygon points="1579.9,367.8 1582.3,366.4 1581.0,381.3 1578.5,382.7" fill="#4a4f5a"/>
<polygon points="1576.3,399.4 1580.3,396.9 1578.5,416.6 1574.6,419.3" fill="#14171b"/>
<polygon points="1576.9,401.4 1579.3,399.8 1578.1,413.4 1575.6,415.1" fill="#4a4f5a"/>
<polygon points="1573.6,430.6 1577.5,427.7 1575.8,446.2 1571.9,449.3" fill="#14171b"/>
<polygon points="1574.1,432.5 1576.5,430.7 1575.4,443.1 1573.0,445.0" fill="#4a4f5a"/>
<polygon points="1590.4,329.6 1596.8,326.8 1585.6,444.0 1579.4,449.1" fill="#22262c"/>
<polygon points="1588.9,360.6 1592.4,358.6 1590.5,379.1 1586.9,381.2" fill="#14171b"/>
<polygon points="1589.4,362.6 1591.4,361.5 1590.1,375.9 1588.0,377.1" fill="#4a4f5a"/>
<polygon points="1585.8,393.3 1589.4,391.1 1587.5,410.3 1584.0,412.8" fill="#14171b"/>
<polygon points="1586.3,395.3 1588.4,394.0 1587.1,407.2 1585.1,408.6" fill="#4a4f5a"/>
<polygon points="1583.0,423.7 1586.5,421.1 1584.8,439.1 1581.3,441.9" fill="#14171b"/>
<polygon points="1583.5,425.6 1585.5,424.1 1584.4,436.1 1582.4,437.7" fill="#4a4f5a"/>
<polygon points="1448.1,407.8 1459.3,402.5 1457.2,442.8 1446.0,449.1" fill="#20242a"/>
<polygon points="1448.3,426.1 1457.2,421.5 1456.3,440.0 1447.3,445.0" fill="#0f1114"/>
<polygon points="1465.0,399.8 1476.2,394.4 1474.0,433.3 1462.8,439.6" fill="#20242a"/>
<polygon points="1465.1,417.5 1474.1,412.8 1473.1,430.7 1464.1,435.7" fill="#0f1114"/>
<polygon points="1481.8,391.8 1492.1,386.9 1489.8,424.4 1479.6,430.2" fill="#20242a"/>
<polygon points="1481.9,408.8 1489.9,404.7 1488.9,421.9 1480.9,426.4" fill="#0f1114"/>
<polygon points="1445.6,457.7 1450.3,455.0 1448.9,482.2 1444.2,485.2" fill="#1c2025"/>
<polygon points="1462.5,445.4 1473.7,439.0 1472.0,468.2 1460.9,475.3" fill="#1c2025"/>
<polygon points="1463.6,451.2 1471.8,446.4 1470.8,464.2 1462.6,469.4" fill="#3d424b"/>
<polygon points="1483.2,429.7 1486.9,427.6 1485.6,449.6 1481.9,451.9" fill="#1c2025"/>
<polygon points="1442.6,499.5 1447.2,496.4 1445.9,523.7 1441.2,527.1" fill="#1c2025"/>
<polygon points="1459.4,485.9 1469.6,479.1 1468.1,505.9 1458.0,513.3" fill="#1c2025"/>
<polygon points="1460.5,491.5 1467.8,486.6 1466.9,502.1 1459.7,507.3" fill="#3d424b"/>
<polygon points="1475.3,473.8 1484.5,467.7 1483.0,493.6 1473.7,500.3" fill="#1c2025"/>
<polygon points="1476.4,479.2 1482.7,475.0 1481.8,490.0 1475.5,494.4" fill="#3d424b"/>
<polygon points="1493.0,459.9 1496.7,457.4 1495.2,481.9 1491.5,484.6" fill="#1c2025"/>
<polygon points="1440.6,540.9 1444.2,538.1 1443.3,556.9 1439.6,559.8" fill="#1c2025"/>
<polygon points="1457.2,526.6 1466.5,519.7 1465.4,539.2 1456.2,546.6" fill="#1c2025"/>
<polygon points="1458.4,532.1 1464.6,527.3 1464.2,535.5 1457.9,540.4" fill="#3d424b"/>
<polygon points="1472.0,514.7 1480.3,508.4 1479.2,528.2 1470.9,534.8" fill="#1c2025"/>
<polygon points="1473.1,520.0 1478.5,515.9 1478.0,524.6 1472.6,528.8" fill="#3d424b"/>
<polygon points="1600.9,328.3 1606.2,325.9 1603.3,355.0 1598.1,357.8" fill="#1c2025"/>
<polygon points="1601.1,337.2 1604.1,335.8 1602.5,352.1 1599.5,353.7" fill="#434852"/>
<polygon points="1597.3,366.1 1602.5,363.1 1600.0,387.5 1594.8,390.9" fill="#1c2025"/>
<polygon points="1597.5,374.9 1600.4,373.1 1599.3,384.8 1596.3,386.7" fill="#434852"/>
<polygon points="1593.7,402.7 1598.9,399.2 1596.6,422.4 1591.4,426.3" fill="#1c2025"/>
<polygon points="1593.9,411.4 1596.9,409.3 1595.8,419.7 1592.9,422.0" fill="#434852"/>
<polygon points="1608.8,324.8 1614.2,322.3 1611.3,350.6 1605.9,353.6" fill="#1c2025"/>
<polygon points="1609.0,333.4 1612.2,331.9 1610.5,347.8 1607.4,349.5" fill="#434852"/>
<polygon points="1605.1,361.6 1610.5,358.6 1608.0,382.4 1602.6,385.9" fill="#1c2025"/>
<polygon points="1605.3,370.2 1608.4,368.3 1607.3,379.7 1604.1,381.7" fill="#434852"/>
<polygon points="1601.5,397.4 1606.8,393.7 1604.5,416.4 1599.2,420.4" fill="#1c2025"/>
<polygon points="1601.7,405.8 1604.8,403.6 1603.7,413.8 1600.6,416.2" fill="#434852"/>
<polygon points="1616.8,321.1 1622.3,318.6 1619.3,346.3 1613.9,349.2" fill="#1c2025"/>
<polygon points="1617.0,329.6 1620.2,328.0 1618.6,343.5 1615.4,345.2" fill="#434852"/>
<polygon points="1613.1,357.1 1618.5,354.0 1616.0,377.2 1610.6,380.7" fill="#1c2025"/>
<polygon points="1613.3,365.4 1616.4,363.5 1615.2,374.6 1612.1,376.6" fill="#434852"/>
<polygon points="1609.4,391.9 1614.8,388.3 1612.4,410.4 1607.1,414.4" fill="#1c2025"/>
<polygon points="1609.6,400.1 1612.7,397.9 1611.7,407.9 1608.5,410.2" fill="#434852"/>
<polygon points="1430.1,459.4 1436.9,455.8 1435.9,480.6 1429.0,484.5" fill="#22252a"/>
<polygon points="1428.2,503.4 1435.2,499.1 1434.4,520.1 1427.3,524.8" fill="#22252a"/>
<polygon points="1426.6,539.8 1433.8,534.9 1433.0,554.7 1425.8,559.9" fill="#22252a"/>
<polygon points="1400.0,516.5 1637.0,369.0 1637.0,372.0 1400.0,522.1" fill="#a2a2a4"/>
<polygon points="1398.0,556.0 1518.8,474.5 1518.8,478.5 1398.0,561.6" fill="#a2a2a4"/>
<polygon points="1546.0,455.0 1634.0,395.5 1634.0,398.9 1546.0,459.2" fill="#a2a2a4"/>
<polygon points="1400.0,522.1 1637.0,372.0 1637.0,372.8 1400.0,523.4" fill="#3e2016"/>
<polygon points="1398.0,561.6 1518.8,478.5 1518.8,479.3 1398.0,562.9" fill="#3e2016"/>
<path d="M1400.0,461.8L1442.5,441.0" fill="none" stroke="#85868e" stroke-width="1.0"/>
<path d="M1442.5,391.8L1630.0,310.0" fill="none" stroke="#85868e" stroke-width="1.0"/>
<path d="M1630.0,310.0L1630.0,331.0" fill="none" stroke="#6a3020" stroke-width="0.8"/>
<path d="M1400.0,461.8L1392.5,597.0L1391.0,625.5" fill="none" stroke="#5a2a1a" stroke-width="0.8"/>
<path d="M1400.0,461.8L1393.5,597.0" fill="none" stroke="#8a8b8d" stroke-width="0.6"/>
<path d="M1400.0,487.0L1442.5,465.0" fill="none" stroke="#6a2f1c" stroke-width="0.5"/>
<path d="M1442.5,421.0L1630.0,338.0" fill="none" stroke="#7a3620" stroke-width="0.4"/>
<polygon points="1421.2,538.0 1456.2,515.0 1466.2,519.5 1432.5,543.0" fill="#7c7d8a"/>
<polygon points="1421.2,538.0 1432.5,543.0 1432.5,549.5 1421.2,544.5" fill="#17181a"/>
<polygon points="1432.5,543.0 1466.2,519.5 1466.2,525.5 1432.5,549.5" fill="#222326"/>
<polygon points="1441.2,547.5 1445.0,545.0 1445.0,557.5 1441.2,560.0" fill="#1a1b1d"/>
<polygon points="1426.2,587.5 1445.0,560.0 1462.5,557.5 1462.5,565.0 1440.0,592.5" fill="#747577"/>
<polygon points="1448.8,552.5 1462.5,557.5 1462.5,565.0 1450.0,560.0" fill="#565759"/>
<path d="M1427.0,587.0L1439.5,592.0" fill="none" stroke="#b0b0b0" stroke-width="0.5"/>
<path d="M1430.1,582.6L1442.6,587.2" fill="none" stroke="#b0b0b0" stroke-width="0.5"/>
<path d="M1433.2,578.2L1445.7,582.3" fill="none" stroke="#b0b0b0" stroke-width="0.5"/>
<path d="M1436.2,573.8L1448.8,577.5" fill="none" stroke="#b0b0b0" stroke-width="0.5"/>
<path d="M1439.3,569.3L1451.8,572.7" fill="none" stroke="#b0b0b0" stroke-width="0.5"/>
<path d="M1442.4,564.9L1454.9,567.8" fill="none" stroke="#b0b0b0" stroke-width="0.5"/>
<path d="M1445.5,560.5L1458.0,563.0" fill="none" stroke="#b0b0b0" stroke-width="0.5"/>
<path d="M1405.0,615.0L1520.0,535.0" fill="none" stroke="#6f706e" stroke-width="0.6"/>
<polygon points="1579.5,430.0 1600.0,418.0 1609.5,420.0 1589.5,432.5" fill="#8a8b96"/>
<polygon points="1579.5,430.0 1589.5,432.5 1589.5,437.0 1579.5,434.0" fill="#17181a"/>
<polygon points="1589.5,432.5 1609.5,420.0 1609.5,424.0 1589.5,437.0" fill="#222326"/>
<polygon points="1580.0,465.9 1594.9,448.3 1609.8,446.0 1605.2,456.0 1595.3,468.9" fill="#707173"/>
<polygon points="1593.7,441.4 1609.8,443.7 1609.8,451.0 1594.9,448.7" fill="#4c4d4f"/>
<path d="M1580.7,465.2L1594.4,468.0" fill="none" stroke="#a8a8a8" stroke-width="0.45"/>
<path d="M1583.5,462.0L1596.3,464.7" fill="none" stroke="#a8a8a8" stroke-width="0.45"/>
<path d="M1586.4,458.8L1598.3,461.4" fill="none" stroke="#a8a8a8" stroke-width="0.45"/>
<path d="M1589.2,455.6L1600.2,458.1" fill="none" stroke="#a8a8a8" stroke-width="0.45"/>
<path d="M1592.0,452.4L1602.1,454.8" fill="none" stroke="#a8a8a8" stroke-width="0.45"/>
<path d="M1594.9,449.2L1604.0,451.5" fill="none" stroke="#a8a8a8" stroke-width="0.45"/>
<polygon points="1623.5,435.0 1636.1,437.3 1629.2,443.0 1625.8,441.4" fill="none" stroke="#77787a" stroke-width="0.5"/>
<polygon points="1103.0,351.0 1352.0,294.0 1476.0,313.5 1442.5,391.8 1442.5,441.0 1400.0,461.8 1103.0,358.0" fill="#5a5c70"/>
<polygon points="1306.5,413.8 1412.5,448.8 1442.5,441.0 1400.0,461.8 1290.0,421.5" fill="#62647a"/>
<clipPath id="cLR"><polygon points="1103.0,351.0 1352.0,294.0 1476.0,313.5 1442.5,391.8 1442.5,441.0 1400.0,461.8 1103.0,358.0"/></clipPath>
<g clip-path="url(#cLR)" stroke="#3b3c44" stroke-width="0.8" fill="none"><path d="M1088.0,358.0L1352.0,294.0M1127.1,371.0L1390.6,298.5M1170.7,385.5L1433.6,303.5M1219.2,401.6L1481.5,309.1M1273.1,419.6L1534.8,315.4M1333.2,439.5L1594.0,322.3M1400.0,461.8L1660.0,330.0M1088.0,358.0L1400.0,461.8M1137.4,346.0L1448.7,437.1M1184.6,334.6L1495.1,413.6M1229.5,323.7L1539.3,391.1M1272.3,313.3L1581.5,369.8M1313.1,303.4L1621.7,349.4M1352.0,294.0L1660.0,330.0"/><path d="M1087.4,358.0h1.2M1104.1,353.9h1.2M1120.6,349.9h1.2M1136.8,346.0h1.2M1152.8,342.1h1.2M1168.5,338.3h1.2M1184.0,334.6h1.2M1199.2,330.9h1.2M1214.1,327.3h1.2M1228.9,323.7h1.2M1243.4,320.2h1.2M1257.6,316.7h1.2M1271.7,313.3h1.2M1285.5,310.0h1.2M1299.1,306.7h1.2M1312.5,303.4h1.2M1325.7,300.2h1.2M1338.6,297.1h1.2M1351.4,294.0h1.2M1126.5,371.0h1.2M1143.3,366.4h1.2M1159.7,361.9h1.2M1175.9,357.4h1.2M1191.8,353.1h1.2M1207.5,348.7h1.2M1222.9,344.5h1.2M1238.1,340.3h1.2M1253.0,336.2h1.2M1267.7,332.2h1.2M1282.2,328.2h1.2M1296.5,324.3h1.2M1310.5,320.4h1.2M1324.3,316.6h1.2M1337.9,312.9h1.2M1351.2,309.2h1.2M1364.4,305.6h1.2M1377.3,302.0h1.2M1390.0,298.5h1.2M1170.1,385.5h1.2M1186.8,380.3h1.2M1203.2,375.2h1.2M1219.3,370.2h1.2M1235.2,365.2h1.2M1250.9,360.3h1.2M1266.3,355.5h1.2M1281.4,350.8h1.2M1296.3,346.2h1.2M1311.0,341.6h1.2M1325.5,337.1h1.2M1339.7,332.6h1.2M1353.7,328.3h1.2M1367.4,324.0h1.2M1381.0,319.8h1.2M1394.3,315.6h1.2M1407.4,311.5h1.2M1420.3,307.5h1.2M1433.0,303.5h1.2M1218.6,401.6h1.2M1235.2,395.8h1.2M1251.6,390.0h1.2M1267.7,384.3h1.2M1283.6,378.7h1.2M1299.2,373.2h1.2M1314.5,367.8h1.2M1329.6,362.5h1.2M1344.5,357.2h1.2M1359.2,352.1h1.2M1373.6,347.0h1.2M1387.7,342.0h1.2M1401.7,337.1h1.2M1415.4,332.2h1.2M1428.9,327.5h1.2M1442.2,322.8h1.2M1455.3,318.1h1.2M1468.2,313.6h1.2M1480.9,309.1h1.2M1272.5,419.6h1.2M1289.1,413.0h1.2M1305.5,406.5h1.2M1321.5,400.0h1.2M1337.3,393.8h1.2M1352.9,387.6h1.2M1368.2,381.5h1.2M1383.3,375.4h1.2M1398.1,369.5h1.2M1412.7,363.7h1.2M1427.1,358.0h1.2M1441.2,352.4h1.2M1455.2,346.8h1.2M1468.9,341.4h1.2M1482.3,336.0h1.2M1495.6,330.7h1.2M1508.7,325.5h1.2M1521.5,320.4h1.2M1534.2,315.4h1.2M1332.6,439.5h1.2M1349.1,432.1h1.2M1365.4,424.8h1.2M1381.4,417.6h1.2M1397.2,410.5h1.2M1412.7,403.5h1.2M1428.0,396.6h1.2M1443.0,389.9h1.2M1457.8,383.2h1.2M1472.4,376.7h1.2M1486.7,370.3h1.2M1500.8,363.9h1.2M1514.7,357.7h1.2M1528.3,351.5h1.2M1541.8,345.5h1.2M1555.0,339.6h1.2M1568.0,333.7h1.2M1580.8,328.0h1.2M1593.4,322.3h1.2M1399.4,461.8h1.2M1415.9,453.4h1.2M1432.1,445.2h1.2M1448.1,437.1h1.2M1463.8,429.1h1.2M1479.3,421.3h1.2M1494.5,413.6h1.2M1509.5,406.0h1.2M1524.2,398.5h1.2M1538.7,391.1h1.2M1553.0,383.9h1.2M1567.1,376.8h1.2M1580.9,369.8h1.2M1594.5,362.9h1.2M1607.9,356.1h1.2M1621.1,349.4h1.2M1634.1,342.8h1.2M1646.8,336.4h1.2M1659.4,330.0h1.2M1087.4,358.0h1.2M1100.0,362.2h1.2M1113.0,366.5h1.2M1126.5,371.0h1.2M1140.5,375.7h1.2M1155.1,380.5h1.2M1170.1,385.5h1.2M1185.7,390.7h1.2M1201.8,396.1h1.2M1218.6,401.6h1.2M1235.9,407.4h1.2M1253.9,413.4h1.2M1272.5,419.6h1.2M1291.8,426.0h1.2M1311.8,432.6h1.2M1332.6,439.5h1.2M1354.1,446.7h1.2M1376.3,454.1h1.2M1399.4,461.8h1.2M1136.8,346.0h1.2M1149.4,349.7h1.2M1162.4,353.5h1.2M1175.9,357.4h1.2M1189.9,361.5h1.2M1204.3,365.8h1.2M1219.3,370.2h1.2M1234.9,374.7h1.2M1251.0,379.4h1.2M1267.7,384.3h1.2M1285.0,389.4h1.2M1302.9,394.6h1.2M1321.5,400.0h1.2M1340.8,405.7h1.2M1360.7,411.5h1.2M1381.4,417.6h1.2M1402.9,423.8h1.2M1425.1,430.3h1.2M1448.1,437.1h1.2M1184.0,334.6h1.2M1196.5,337.8h1.2M1209.5,341.1h1.2M1222.9,344.5h1.2M1236.9,348.0h1.2M1251.3,351.7h1.2M1266.3,355.5h1.2M1281.8,359.5h1.2M1297.9,363.6h1.2M1314.5,367.8h1.2M1331.8,372.2h1.2M1349.7,376.7h1.2M1368.2,381.5h1.2M1387.4,386.3h1.2M1407.4,391.4h1.2M1428.0,396.6h1.2M1449.4,402.1h1.2M1471.5,407.7h1.2M1494.5,413.6h1.2M1228.9,323.7h1.2M1241.4,326.4h1.2M1254.3,329.2h1.2M1267.7,332.2h1.2M1281.7,335.2h1.2M1296.1,338.3h1.2M1311.0,341.6h1.2M1326.5,344.9h1.2M1342.5,348.4h1.2M1359.2,352.1h1.2M1376.4,355.8h1.2M1394.2,359.7h1.2M1412.7,363.7h1.2M1431.9,367.9h1.2M1451.8,372.2h1.2M1472.4,376.7h1.2M1493.7,381.3h1.2M1515.8,386.2h1.2M1538.7,391.1h1.2M1271.7,313.3h1.2M1284.2,315.6h1.2M1297.1,318.0h1.2M1310.5,320.4h1.2M1324.4,322.9h1.2M1338.7,325.6h1.2M1353.7,328.3h1.2M1369.1,331.1h1.2M1385.1,334.0h1.2M1401.7,337.1h1.2M1418.9,340.2h1.2M1436.7,343.5h1.2M1455.2,346.8h1.2M1474.3,350.3h1.2M1494.1,353.9h1.2M1514.7,357.7h1.2M1536.0,361.6h1.2M1558.0,365.6h1.2M1580.9,369.8h1.2M1312.5,303.4h1.2M1324.9,305.3h1.2M1337.8,307.2h1.2M1351.2,309.2h1.2M1365.1,311.3h1.2M1379.4,313.4h1.2M1394.3,315.6h1.2M1409.7,317.9h1.2M1425.7,320.3h1.2M1442.2,322.8h1.2M1459.4,325.3h1.2M1477.2,328.0h1.2M1495.6,330.7h1.2M1514.7,333.6h1.2M1534.5,336.5h1.2M1555.0,339.6h1.2M1576.2,342.7h1.2M1598.3,346.0h1.2M1621.1,349.4h1.2M1351.4,294.0h1.2M1363.8,295.5h1.2M1376.7,297.0h1.2M1390.0,298.5h1.2M1403.9,300.1h1.2M1418.2,301.8h1.2M1433.0,303.5h1.2M1448.4,305.3h1.2M1464.4,307.2h1.2M1480.9,309.1h1.2M1498.0,311.1h1.2M1515.8,313.2h1.2M1534.2,315.4h1.2M1553.2,317.6h1.2M1573.0,319.9h1.2M1593.4,322.3h1.2M1614.6,324.8h1.2M1636.6,327.3h1.2M1659.4,330.0h1.2" stroke="#15161a" stroke-width="1.2"/></g>
<polygon points="1103.0,337.5 1352.0,285.6 1352.0,296.0 1103.0,352.0" fill="#96482f"/>
<polygon points="1352.0,285.6 1474.0,306.1 1474.0,315.0 1352.0,296.0" fill="#7c3924"/>
<path d="M1103.0,337.5L1352.0,285.6L1474.0,306.1" fill="none" stroke="#5c5d60" stroke-width="1.1"/>
<path d="M1103.0,352.0L1352.0,296.0L1474.0,315.0" fill="none" stroke="#5a2a1a" stroke-width="0.5"/>
<rect x="1121.2" y="339.8" width="12.5" height="12.8" fill="#606161" stroke="#3a3b3b" stroke-width="0.4"/>
<path d="M1123.0,340.6V352.5M1124.8,340.6V352.5M1126.6,340.6V352.5M1128.4,340.6V352.5M1130.2,340.6V352.5M1132.0,340.6V352.5" stroke="#9a9b99" stroke-width="0.45"/>
<path d="M1122.1,339.8V335.5M1125.7,339.8V335.5M1129.3,339.8V335.5M1132.9,339.8V335.5" stroke="#6c6d6b" stroke-width="0.9"/>
<rect x="1144.5" y="346.3" width="8.0" height="9.9" fill="#606161" stroke="#3a3b3b" stroke-width="0.4"/>
<path d="M1146.1,347.0V356.2M1147.7,347.0V356.2M1149.3,347.0V356.2M1150.9,347.0V356.2" stroke="#9a9b99" stroke-width="0.45"/>
<path d="M1145.3,346.3V343.0M1148.5,346.3V343.0M1151.7,346.3V343.0" stroke="#6c6d6b" stroke-width="0.9"/>
<rect x="1177.5" y="334.8" width="13.8" height="10.7" fill="#606161" stroke="#3a3b3b" stroke-width="0.4"/>
<path d="M1179.2,335.5V345.5M1180.9,335.5V345.5M1182.7,335.5V345.5M1184.4,335.5V345.5M1186.1,335.5V345.5M1187.8,335.5V345.5M1189.5,335.5V345.5" stroke="#9a9b99" stroke-width="0.45"/>
<path d="M1178.4,334.8V331.2M1181.8,334.8V331.2M1185.2,334.8V331.2M1188.7,334.8V331.2" stroke="#6c6d6b" stroke-width="0.9"/>
<rect x="1172.5" y="356.8" width="12.5" height="12.8" fill="#606161" stroke="#3a3b3b" stroke-width="0.4"/>
<path d="M1174.3,357.6V369.5M1176.1,357.6V369.5M1177.9,357.6V369.5M1179.6,357.6V369.5M1181.4,357.6V369.5M1183.2,357.6V369.5" stroke="#9a9b99" stroke-width="0.45"/>
<path d="M1173.4,356.8V352.5M1177.0,356.8V352.5M1180.5,356.8V352.5M1184.1,356.8V352.5" stroke="#6c6d6b" stroke-width="0.9"/>
<rect x="1212.5" y="368.0" width="12.5" height="15.0" fill="#606161" stroke="#3a3b3b" stroke-width="0.4"/>
<path d="M1214.3,369.0V383.0M1216.1,369.0V383.0M1217.9,369.0V383.0M1219.6,369.0V383.0M1221.4,369.0V383.0M1223.2,369.0V383.0" stroke="#9a9b99" stroke-width="0.45"/>
<path d="M1213.4,368.0V363.0M1217.0,368.0V363.0M1220.5,368.0V363.0M1224.1,368.0V363.0" stroke="#6c6d6b" stroke-width="0.9"/>
<rect x="1231.2" y="365.5" width="23.8" height="15.0" fill="#606161" stroke="#3a3b3b" stroke-width="0.4"/>
<path d="M1232.9,366.5V380.5M1234.6,366.5V380.5M1236.3,366.5V380.5M1238.0,366.5V380.5M1239.7,366.5V380.5M1241.4,366.5V380.5M1243.1,366.5V380.5M1244.8,366.5V380.5M1246.5,366.5V380.5M1248.2,366.5V380.5M1249.9,366.5V380.5M1251.6,366.5V380.5M1253.3,366.5V380.5" stroke="#9a9b99" stroke-width="0.45"/>
<path d="M1232.1,365.5V360.5M1235.5,365.5V360.5M1238.9,365.5V360.5M1242.3,365.5V360.5M1245.7,365.5V360.5M1249.1,365.5V360.5M1252.5,365.5V360.5" stroke="#6c6d6b" stroke-width="0.9"/>
<rect x="1230.0" y="323.9" width="21.2" height="11.6" fill="#606161" stroke="#3a3b3b" stroke-width="0.4"/>
<path d="M1231.6,324.6V335.5M1233.3,324.6V335.5M1234.9,324.6V335.5M1236.5,324.6V335.5M1238.2,324.6V335.5M1239.8,324.6V335.5M1241.4,324.6V335.5M1243.1,324.6V335.5M1244.7,324.6V335.5M1246.3,324.6V335.5M1248.0,324.6V335.5M1249.6,324.6V335.5" stroke="#9a9b99" stroke-width="0.45"/>
<path d="M1230.8,323.9V320.0M1234.1,323.9V320.0M1237.4,323.9V320.0M1240.6,323.9V320.0M1243.9,323.9V320.0M1247.2,323.9V320.0M1250.4,323.9V320.0" stroke="#6c6d6b" stroke-width="0.9"/>
<rect x="1228.8" y="345.8" width="18.8" height="9.8" fill="#606161" stroke="#3a3b3b" stroke-width="0.4"/>
<path d="M1230.5,346.4V355.5M1232.2,346.4V355.5M1233.9,346.4V355.5M1235.6,346.4V355.5M1237.3,346.4V355.5M1239.0,346.4V355.5M1240.7,346.4V355.5M1242.4,346.4V355.5M1244.1,346.4V355.5M1245.8,346.4V355.5" stroke="#9a9b99" stroke-width="0.45"/>
<path d="M1229.6,345.8V342.5M1233.0,345.8V342.5M1236.4,345.8V342.5M1239.8,345.8V342.5M1243.2,345.8V342.5M1246.6,345.8V342.5" stroke="#6c6d6b" stroke-width="0.9"/>
<rect x="1286.2" y="311.4" width="10.0" height="10.3" fill="#606161" stroke="#3a3b3b" stroke-width="0.4"/>
<path d="M1287.9,312.1V321.8M1289.6,312.1V321.8M1291.2,312.1V321.8M1292.9,312.1V321.8M1294.6,312.1V321.8" stroke="#9a9b99" stroke-width="0.45"/>
<path d="M1287.1,311.4V308.0M1290.4,311.4V308.0M1293.8,311.4V308.0" stroke="#6c6d6b" stroke-width="0.9"/>
<rect x="1330.0" y="293.6" width="15.0" height="9.4" fill="#606161" stroke="#3a3b3b" stroke-width="0.4"/>
<path d="M1331.7,294.2V303.0M1333.3,294.2V303.0M1335.0,294.2V303.0M1336.7,294.2V303.0M1338.3,294.2V303.0M1340.0,294.2V303.0M1341.7,294.2V303.0M1343.3,294.2V303.0" stroke="#9a9b99" stroke-width="0.45"/>
<path d="M1330.8,293.6V290.5M1334.2,293.6V290.5M1337.5,293.6V290.5M1340.8,293.6V290.5M1344.2,293.6V290.5" stroke="#6c6d6b" stroke-width="0.9"/>
<rect x="1373.8" y="302.2" width="15.0" height="12.8" fill="#606161" stroke="#3a3b3b" stroke-width="0.4"/>
<path d="M1375.4,303.1V315.0M1377.1,303.1V315.0M1378.8,303.1V315.0M1380.4,303.1V315.0M1382.1,303.1V315.0M1383.8,303.1V315.0M1385.4,303.1V315.0M1387.1,303.1V315.0" stroke="#9a9b99" stroke-width="0.45"/>
<path d="M1374.6,302.2V298.0M1377.9,302.2V298.0M1381.2,302.2V298.0M1384.6,302.2V298.0M1387.9,302.2V298.0" stroke="#6c6d6b" stroke-width="0.9"/>
<rect x="1410.0" y="306.4" width="17.5" height="10.1" fill="#606161" stroke="#3a3b3b" stroke-width="0.4"/>
<path d="M1411.8,307.1V316.5M1413.5,307.1V316.5M1415.2,307.1V316.5M1417.0,307.1V316.5M1418.8,307.1V316.5M1420.5,307.1V316.5M1422.2,307.1V316.5M1424.0,307.1V316.5M1425.8,307.1V316.5" stroke="#9a9b99" stroke-width="0.45"/>
<path d="M1410.9,306.4V303.0M1414.4,306.4V303.0M1417.9,306.4V303.0M1421.4,306.4V303.0M1424.9,306.4V303.0" stroke="#6c6d6b" stroke-width="0.9"/>
<rect x="1433.8" y="311.0" width="13.8" height="9.0" fill="#606161" stroke="#3a3b3b" stroke-width="0.4"/>
<path d="M1435.5,311.6V320.0M1437.2,311.6V320.0M1438.9,311.6V320.0M1440.6,311.6V320.0M1442.3,311.6V320.0M1444.1,311.6V320.0M1445.8,311.6V320.0" stroke="#9a9b99" stroke-width="0.45"/>
<path d="M1434.6,311.0V308.0M1438.0,311.0V308.0M1441.5,311.0V308.0M1444.9,311.0V308.0" stroke="#6c6d6b" stroke-width="0.9"/>
<rect x="1450.0" y="313.5" width="11.2" height="9.0" fill="#606161" stroke="#3a3b3b" stroke-width="0.4"/>
<path d="M1451.6,314.1V322.5M1453.2,314.1V322.5M1454.8,314.1V322.5M1456.4,314.1V322.5M1458.0,314.1V322.5M1459.6,314.1V322.5" stroke="#9a9b99" stroke-width="0.45"/>
<path d="M1450.8,313.5V310.5M1454.0,313.5V310.5M1457.2,313.5V310.5M1460.4,313.5V310.5" stroke="#6c6d6b" stroke-width="0.9"/>
<path d="M1267.5,383.5V367.5Q1272.5,358.5 1277.5,367.5V383.5Z" fill="#77787a" stroke="#3c3d3c" stroke-width="0.5"/>
<rect x="1212.5" y="345.0" width="12.5" height="8.8" fill="#707174" stroke="#3c3d3c" stroke-width="0.4"/>
<rect x="1275.0" y="411.2" width="17.5" height="8.8" fill="#707174" stroke="#3c3d3c" stroke-width="0.4"/>
<rect x="1255.0" y="348.8" width="10.0" height="5.0" fill="#707174" stroke="#3c3d3c" stroke-width="0.4"/>
<path d="M1140.8,355.0L1140.8,315.5" fill="none" stroke="#6f7072" stroke-width="0.6"/>
<path d="M1138.5,355.6L1140.8,351.6L1143.0,355.6Z" fill="#4f5052"/>
<path d="M1196.8,338.0L1196.8,305.0" fill="none" stroke="#6f7072" stroke-width="0.6"/>
<path d="M1194.5,338.6L1196.8,334.6L1199.0,338.6Z" fill="#4f5052"/>
<path d="M1244.2,326.2L1244.2,295.5" fill="none" stroke="#6f7072" stroke-width="0.6"/>
<path d="M1242.0,326.9L1244.2,322.9L1246.5,326.9Z" fill="#4f5052"/>
<path d="M1288.8,316.2L1288.8,287.0" fill="none" stroke="#6f7072" stroke-width="0.6"/>
<path d="M1286.5,316.9L1288.8,312.9L1291.0,316.9Z" fill="#4f5052"/>
<path d="M1337.5,293.8L1337.5,278.0" fill="none" stroke="#6f7072" stroke-width="0.6"/>
<path d="M1335.3,294.4L1337.5,290.4L1339.7,294.4Z" fill="#4f5052"/>
<path d="M1381.8,302.5L1381.8,277.5" fill="none" stroke="#6f7072" stroke-width="0.6"/>
<path d="M1379.5,303.1L1381.8,299.1L1384.0,303.1Z" fill="#4f5052"/>
<path d="M1453.0,316.2L1453.0,288.0" fill="none" stroke="#6f7072" stroke-width="0.6"/>
<path d="M1450.8,316.9L1453.0,312.9L1455.2,316.9Z" fill="#4f5052"/>
<path d="M1182.5,343.0L1182.5,320.0" fill="none" stroke="#6f7072" stroke-width="0.6"/>
<path d="M1180.3,343.6L1182.5,339.6L1184.7,343.6Z" fill="#4f5052"/>
<path d="M1217.5,370.0L1217.5,332.5" fill="none" stroke="#6f7072" stroke-width="0.6"/>
<path d="M1215.3,370.6L1217.5,366.6L1219.7,370.6Z" fill="#4f5052"/>
<path d="M1279.2,392.5L1279.2,355.0" fill="none" stroke="#6f7072" stroke-width="0.6"/>
<path d="M1277.0,393.1L1279.2,389.1L1281.5,393.1Z" fill="#4f5052"/>
<path d="M1322.5,328.0L1322.5,302.5" fill="none" stroke="#6f7072" stroke-width="0.6"/>
<path d="M1320.3,328.6L1322.5,324.6L1324.7,328.6Z" fill="#4f5052"/>
<path d="M1148.8,352.5L1148.8,330.0" fill="none" stroke="#6f7072" stroke-width="0.6"/>
<path d="M1146.5,353.1L1148.8,349.1L1151.0,353.1Z" fill="#4f5052"/>
<path d="M1135.0,345.0L1177.5,335.5" fill="none" stroke="#7d7e80" stroke-width="0.7"/>
<path d="M1152.5,356.2L1212.5,372.5" fill="none" stroke="#7d7e80" stroke-width="0.7"/>
<path d="M1191.2,345.0L1230.0,332.5" fill="none" stroke="#7d7e80" stroke-width="0.7"/>
<path d="M1247.5,345.0L1286.2,320.0" fill="none" stroke="#7d7e80" stroke-width="0.7"/>
<path d="M1225.0,370.0L1231.2,368.8" fill="none" stroke="#7d7e80" stroke-width="0.7"/>
<path d="M1255.0,380.0L1270.0,383.8" fill="none" stroke="#7d7e80" stroke-width="0.7"/>
<path d="M1185.0,368.8L1212.5,377.5" fill="none" stroke="#7d7e80" stroke-width="0.7"/>
<path d="M1251.2,335.5L1287.5,323.8" fill="none" stroke="#7d7e80" stroke-width="0.7"/>
<path d="M1345.0,301.2L1375.0,307.5" fill="none" stroke="#7d7e80" stroke-width="0.7"/>
<path d="M1388.8,312.5L1410.0,310.0" fill="none" stroke="#7d7e80" stroke-width="0.7"/>
<path d="M1427.5,316.5L1450.0,320.0" fill="none" stroke="#7d7e80" stroke-width="0.7"/>
<rect x="1165.3" y="358.4" width="1.8" height="3" fill="#0e0e10"/>
<rect x="1362.8" y="307.1" width="1.8" height="3" fill="#0e0e10"/>
<rect x="1224.1" y="367.1" width="1.8" height="3" fill="#0e0e10"/>
<rect x="1226.2" y="341.2" width="25.0" height="15.0" fill="#6a6b6c" fill-opacity="0.55" stroke="#8e8f90" stroke-width="0.4"/>
<rect x="1348.8" y="355.0" width="46.2" height="25.0" fill="#6a6b6c" fill-opacity="0.55" stroke="#8e8f90" stroke-width="0.4"/>
<polygon points="1253.8,343.1 1324.4,324.0 1325.0,351.9 1306.2,357.2" fill="#1c2024"/>
<polygon points="1266.2,340.5 1271.2,339.1 1271.2,348.1 1266.2,346.9" fill="#a09a88"/>
<polygon points="1277.5,337.4 1282.8,336.0 1282.8,351.0 1277.5,349.7" fill="#a09a88"/>
<polygon points="1293.5,333.1 1298.2,331.8 1298.2,354.9 1293.5,353.7" fill="#a09a88"/>
<polygon points="1307.2,329.4 1312.0,328.1 1312.0,355.4 1307.2,356.7" fill="#a09a88"/>
<polygon points="1321.6,325.5 1325.0,324.6 1325.0,351.9 1321.6,352.8" fill="#a09a88"/>
<path d="M1253.8,343.1L1324.4,324.0" fill="none" stroke="#5c5d60" stroke-width="0.9"/>
<polygon points="1245.0,345.2 1253.8,343.5 1306.2,356.9 1306.2,373.1 1300.0,368.1 1245.0,347.5" fill="#9a9480"/>
<path d="M1253.8,343.5L1306.2,356.9" fill="none" stroke="#6a675e" stroke-width="0.6"/>
<polygon points="1358.8,312.8 1441.2,329.0 1435.0,333.5 1404.4,344.2 1378.8,338.2 1358.8,341.5" fill="#1c2024"/>
<polygon points="1358.8,314.5 1369.0,316.4 1369.0,339.9 1358.8,341.5" fill="#a9a49d"/>
<polygon points="1373.8,317.3 1378.2,318.1 1378.2,338.4 1373.8,339.1" fill="#a09a88"/>
<polygon points="1383.8,319.1 1388.8,320.1 1388.8,340.6 1383.8,339.4" fill="#a09a88"/>
<polygon points="1393.8,321.0 1398.2,321.8 1398.2,342.8 1393.8,341.8" fill="#a09a88"/>
<polygon points="1408.5,323.7 1413.2,324.6 1413.2,341.1 1408.5,342.8" fill="#a09a88"/>
<polygon points="1420.0,325.8 1424.0,326.6 1424.0,337.3 1420.0,338.8" fill="#a09a88"/>
<path d="M1358.8,313.0L1441.2,329.0" fill="none" stroke="#5c5d60" stroke-width="0.9"/>
<polygon points="1297.5,303.8 1338.8,310.6 1338.8,347.5 1325.0,352.2 1324.4,324.0 1297.5,329.0" fill="#5f2e1f"/>
<polygon points="1338.8,310.6 1358.8,306.2 1358.8,341.5 1338.8,347.5" fill="#8a4630"/>
<polygon points="1297.5,303.8 1316.2,299.0 1358.8,306.2 1338.8,310.6" fill="#7a3c29"/>
<polygon points="1303.1,304.0 1316.9,300.8 1353.1,306.6 1338.5,309.5" fill="#5a5c70"/>
<polygon points="1341.9,315.6 1353.1,313.1 1353.1,342.5 1341.9,345.6" fill="#1b1e22"/>
<polygon points="1343.5,316.9 1351.9,315.0 1351.9,328.1 1343.5,330.2" fill="#735a5a"/>
<polygon points="1343.5,331.9 1351.9,329.8 1351.9,341.2 1343.5,343.8" fill="#3c3d46"/>
<path d="M1297.5,303.8L1316.2,299.0L1358.8,306.2L1338.8,310.6L1297.5,303.8" fill="none" stroke="#5c5d60" stroke-width="0.9"/>
<path d="M1338.8,310.6L1338.8,347.5" fill="none" stroke="#5a2a1a" stroke-width="0.7"/>
<polygon points="1298.1,317.5 1306.2,318.1 1306.2,328.1 1298.1,328.5" fill="#7a4e42"/>
<polygon points="1306.5,357.5 1378.8,338.5 1404.5,344.5 1504.6,309.6 1474.0,306.1 1518.8,294.2 1630.0,310.0 1442.5,391.8" fill="#96482f"/>
<polygon points="1378.8,338.5 1404.5,344.5 1404.5,354.5 1378.8,348.5" fill="#8a452e"/>
<polygon points="1324.2,362.3 1378.8,347.6 1404.5,354.5 1503.0,319.5 1504.8,310.4 1520.0,303.0 1628.0,317.8 1442.5,393.2" fill="#5a5c70"/>
<polygon points="1474.0,306.1 1504.6,309.6 1474.0,319.2" fill="#84402b"/>
<clipPath id="cHR"><polygon points="1324.2,362.3 1378.8,347.6 1404.5,354.5 1503.0,319.5 1504.8,310.4 1520.0,303.0 1628.0,317.8 1442.5,393.2"/></clipPath>
<g clip-path="url(#cHR)" stroke="#3b3c44" stroke-width="0.8" fill="none"><path d="M1306.5,357.5L1480.0,300.0M1350.4,368.6L1528.4,303.2M1395.7,380.0L1578.4,306.6M1442.5,391.8L1630.0,310.0M1306.5,357.5L1442.5,391.8M1344.4,345.0L1483.4,373.9M1380.6,333.0L1522.6,356.8M1415.2,321.5L1560.0,340.5M1448.3,310.5L1595.8,324.9M1480.0,300.0L1630.0,310.0"/><path d="M1305.9,357.5h1.2M1318.7,353.3h1.2M1331.3,349.1h1.2M1343.8,345.0h1.2M1356.0,340.9h1.2M1368.1,336.9h1.2M1380.0,333.0h1.2M1391.7,329.1h1.2M1403.2,325.2h1.2M1414.6,321.5h1.2M1425.8,317.8h1.2M1436.9,314.1h1.2M1447.7,310.5h1.2M1458.4,306.9h1.2M1469.0,303.4h1.2M1479.4,300.0h1.2M1349.8,368.6h1.2M1362.9,363.7h1.2M1375.9,359.0h1.2M1388.7,354.3h1.2M1401.2,349.7h1.2M1413.6,345.1h1.2M1425.8,340.7h1.2M1437.8,336.3h1.2M1449.7,331.9h1.2M1461.3,327.6h1.2M1472.8,323.4h1.2M1484.2,319.2h1.2M1495.3,315.2h1.2M1506.3,311.1h1.2M1517.1,307.1h1.2M1527.8,303.2h1.2M1395.1,380.0h1.2M1408.6,374.5h1.2M1421.9,369.2h1.2M1435.0,363.9h1.2M1447.9,358.8h1.2M1460.6,353.7h1.2M1473.1,348.6h1.2M1485.5,343.7h1.2M1497.6,338.8h1.2M1509.6,334.0h1.2M1521.4,329.2h1.2M1533.0,324.6h1.2M1544.5,320.0h1.2M1555.7,315.4h1.2M1566.9,311.0h1.2M1577.8,306.6h1.2M1441.9,391.8h1.2M1455.7,385.7h1.2M1469.4,379.8h1.2M1482.8,373.9h1.2M1496.1,368.1h1.2M1509.1,362.4h1.2M1522.0,356.8h1.2M1534.6,351.3h1.2M1547.1,345.9h1.2M1559.4,340.5h1.2M1571.5,335.3h1.2M1583.4,330.0h1.2M1595.2,324.9h1.2M1606.8,319.9h1.2M1618.2,314.9h1.2M1629.4,310.0h1.2M1305.9,357.5h1.2M1320.4,361.1h1.2M1335.0,364.8h1.2M1349.8,368.6h1.2M1364.7,372.3h1.2M1379.9,376.1h1.2M1395.1,380.0h1.2M1410.5,383.9h1.2M1426.1,387.8h1.2M1441.9,391.8h1.2M1343.8,345.0h1.2M1358.6,348.0h1.2M1373.5,351.2h1.2M1388.7,354.3h1.2M1403.9,357.5h1.2M1419.4,360.7h1.2M1435.0,363.9h1.2M1450.8,367.2h1.2M1466.7,370.6h1.2M1482.8,373.9h1.2M1380.0,333.0h1.2M1395.1,335.5h1.2M1410.4,338.1h1.2M1425.8,340.7h1.2M1441.4,343.3h1.2M1457.2,345.9h1.2M1473.1,348.6h1.2M1489.2,351.3h1.2M1505.5,354.1h1.2M1522.0,356.8h1.2M1414.6,321.5h1.2M1430.0,323.5h1.2M1445.6,325.6h1.2M1461.3,327.6h1.2M1477.2,329.7h1.2M1493.3,331.8h1.2M1509.6,334.0h1.2M1526.0,336.1h1.2M1542.6,338.3h1.2M1559.4,340.5h1.2M1447.7,310.5h1.2M1463.4,312.0h1.2M1479.3,313.6h1.2M1495.3,315.2h1.2M1511.5,316.7h1.2M1527.9,318.3h1.2M1544.5,320.0h1.2M1561.2,321.6h1.2M1578.1,323.3h1.2M1595.2,324.9h1.2M1479.4,300.0h1.2M1495.4,301.1h1.2M1511.5,302.1h1.2M1527.8,303.2h1.2M1544.3,304.3h1.2M1561.0,305.4h1.2M1577.8,306.6h1.2M1594.8,307.7h1.2M1612.0,308.8h1.2M1629.4,310.0h1.2" stroke="#15161a" stroke-width="1.2"/></g>
<path d="M1306.5,357.5L1378.8,338.5L1404.5,344.5L1504.6,309.6L1474.0,306.1L1518.8,294.2L1630.0,310.0" fill="none" stroke="#5c5d60" stroke-width="1.1"/>
<path d="M1324.2,362.3L1378.8,347.6L1404.5,354.5L1503.0,319.5" fill="none" stroke="#5a2a1a" stroke-width="0.5"/>
<path d="M1504.8,310.4L1520.0,303.0L1628.0,317.8" fill="none" stroke="#5a2a1a" stroke-width="0.5"/>
<rect x="1372.5" y="356.1" width="10.0" height="5.4" fill="#606161" stroke="#3a3b3b" stroke-width="0.4"/>
<path d="M1374.2,356.4V361.5M1375.8,356.4V361.5M1377.5,356.4V361.5M1379.2,356.4V361.5M1380.8,356.4V361.5" stroke="#9a9b99" stroke-width="0.45"/>
<path d="M1373.3,356.1V354.2M1376.7,356.1V354.2M1380.0,356.1V354.2" stroke="#6c6d6b" stroke-width="0.9"/>
<rect x="1391.2" y="361.0" width="18.8" height="16.5" fill="#606161" stroke="#3a3b3b" stroke-width="0.4"/>
<path d="M1393.0,362.1V377.5M1394.7,362.1V377.5M1396.4,362.1V377.5M1398.1,362.1V377.5M1399.8,362.1V377.5M1401.5,362.1V377.5M1403.2,362.1V377.5M1404.9,362.1V377.5M1406.6,362.1V377.5M1408.3,362.1V377.5" stroke="#9a9b99" stroke-width="0.45"/>
<path d="M1392.1,361.0V355.5M1395.5,361.0V355.5M1398.9,361.0V355.5M1402.3,361.0V355.5M1405.7,361.0V355.5M1409.1,361.0V355.5" stroke="#6c6d6b" stroke-width="0.9"/>
<rect x="1405.0" y="369.1" width="12.5" height="10.9" fill="#606161" stroke="#3a3b3b" stroke-width="0.4"/>
<path d="M1406.8,369.9V380.0M1408.6,369.9V380.0M1410.4,369.9V380.0M1412.1,369.9V380.0M1413.9,369.9V380.0M1415.7,369.9V380.0" stroke="#9a9b99" stroke-width="0.45"/>
<path d="M1405.9,369.1V365.5M1409.5,369.1V365.5M1413.0,369.1V365.5M1416.6,369.1V365.5" stroke="#6c6d6b" stroke-width="0.9"/>
<rect x="1443.8" y="361.9" width="12.5" height="8.1" fill="#606161" stroke="#3a3b3b" stroke-width="0.4"/>
<path d="M1445.5,362.5V370.0M1447.3,362.5V370.0M1449.1,362.5V370.0M1450.9,362.5V370.0M1452.7,362.5V370.0M1454.5,362.5V370.0" stroke="#9a9b99" stroke-width="0.45"/>
<path d="M1444.6,361.9V359.2M1448.2,361.9V359.2M1451.8,361.9V359.2M1455.4,361.9V359.2" stroke="#6c6d6b" stroke-width="0.9"/>
<rect x="1464.5" y="365.4" width="5.5" height="7.1" fill="#606161" stroke="#3a3b3b" stroke-width="0.4"/>
<path d="M1466.3,365.9V372.5M1468.2,365.9V372.5" stroke="#9a9b99" stroke-width="0.45"/>
<path d="M1465.4,365.4V363.0M1469.1,365.4V363.0" stroke="#6c6d6b" stroke-width="0.9"/>
<rect x="1376.2" y="301.0" width="10.0" height="12.8" fill="#606161" stroke="#3a3b3b" stroke-width="0.4"/>
<path d="M1377.9,301.9V313.8M1379.6,301.9V313.8M1381.2,301.9V313.8M1382.9,301.9V313.8M1384.6,301.9V313.8" stroke="#9a9b99" stroke-width="0.45"/>
<path d="M1377.1,301.0V296.8M1380.4,301.0V296.8M1383.8,301.0V296.8" stroke="#6c6d6b" stroke-width="0.9"/>
<rect x="1410.0" y="307.2" width="15.0" height="9.0" fill="#606161" stroke="#3a3b3b" stroke-width="0.4"/>
<path d="M1411.7,307.9V316.2M1413.3,307.9V316.2M1415.0,307.9V316.2M1416.7,307.9V316.2M1418.3,307.9V316.2M1420.0,307.9V316.2M1421.7,307.9V316.2M1423.3,307.9V316.2" stroke="#9a9b99" stroke-width="0.45"/>
<path d="M1410.8,307.2V304.2M1414.2,307.2V304.2M1417.5,307.2V304.2M1420.8,307.2V304.2M1424.2,307.2V304.2" stroke="#6c6d6b" stroke-width="0.9"/>
<rect x="1433.8" y="311.6" width="26.2" height="10.9" fill="#606161" stroke="#3a3b3b" stroke-width="0.4"/>
<path d="M1435.4,312.4V322.5M1437.0,312.4V322.5M1438.7,312.4V322.5M1440.3,312.4V322.5M1442.0,312.4V322.5M1443.6,312.4V322.5M1445.2,312.4V322.5M1446.9,312.4V322.5M1448.5,312.4V322.5M1450.2,312.4V322.5M1451.8,312.4V322.5M1453.4,312.4V322.5M1455.1,312.4V322.5M1456.7,312.4V322.5M1458.4,312.4V322.5" stroke="#9a9b99" stroke-width="0.45"/>
<path d="M1434.6,311.6V308.0M1437.9,311.6V308.0M1441.1,311.6V308.0M1444.4,311.6V308.0M1447.7,311.6V308.0M1451.0,311.6V308.0M1454.3,311.6V308.0M1457.5,311.6V308.0" stroke="#6c6d6b" stroke-width="0.9"/>
<rect x="1390.0" y="358.5" width="17.5" height="16.5" fill="#606161" stroke="#3a3b3b" stroke-width="0.4"/>
<path d="M1391.8,359.6V375.0M1393.5,359.6V375.0M1395.2,359.6V375.0M1397.0,359.6V375.0M1398.8,359.6V375.0M1400.5,359.6V375.0M1402.2,359.6V375.0M1404.0,359.6V375.0M1405.8,359.6V375.0" stroke="#9a9b99" stroke-width="0.45"/>
<path d="M1390.9,358.5V353.0M1394.4,358.5V353.0M1397.9,358.5V353.0M1401.4,358.5V353.0M1404.9,358.5V353.0" stroke="#6c6d6b" stroke-width="0.9"/>
<rect x="1402.5" y="361.6" width="18.8" height="18.4" fill="#606161" stroke="#3a3b3b" stroke-width="0.4"/>
<path d="M1404.2,362.9V380.0M1405.9,362.9V380.0M1407.6,362.9V380.0M1409.3,362.9V380.0M1411.0,362.9V380.0M1412.7,362.9V380.0M1414.4,362.9V380.0M1416.1,362.9V380.0M1417.8,362.9V380.0M1419.5,362.9V380.0" stroke="#9a9b99" stroke-width="0.45"/>
<path d="M1403.4,361.6V355.5M1406.8,361.6V355.5M1410.2,361.6V355.5M1413.6,361.6V355.5M1417.0,361.6V355.5M1420.4,361.6V355.5" stroke="#6c6d6b" stroke-width="0.9"/>
<rect x="1443.8" y="361.9" width="12.5" height="8.1" fill="#606161" stroke="#3a3b3b" stroke-width="0.4"/>
<path d="M1445.5,362.5V370.0M1447.3,362.5V370.0M1449.1,362.5V370.0M1450.9,362.5V370.0M1452.7,362.5V370.0M1454.5,362.5V370.0" stroke="#9a9b99" stroke-width="0.45"/>
<path d="M1444.6,361.9V359.2M1448.2,361.9V359.2M1451.8,361.9V359.2M1455.4,361.9V359.2" stroke="#6c6d6b" stroke-width="0.9"/>
<rect x="1463.8" y="366.6" width="6.2" height="7.1" fill="#606161" stroke="#3a3b3b" stroke-width="0.4"/>
<path d="M1465.8,367.1V373.8M1467.9,367.1V373.8" stroke="#9a9b99" stroke-width="0.45"/>
<path d="M1464.8,366.6V364.2M1469.0,366.6V364.2" stroke="#6c6d6b" stroke-width="0.9"/>
<rect x="1542.5" y="317.6" width="6.2" height="6.2" fill="#606161" stroke="#3a3b3b" stroke-width="0.4"/>
<path d="M1544.6,318.0V323.8M1546.7,318.0V323.8" stroke="#9a9b99" stroke-width="0.45"/>
<path d="M1543.5,317.6V315.5M1547.7,317.6V315.5" stroke="#6c6d6b" stroke-width="0.9"/>
<rect x="1568.8" y="321.6" width="16.2" height="7.1" fill="#606161" stroke="#3a3b3b" stroke-width="0.4"/>
<path d="M1570.4,322.1V328.8M1572.0,322.1V328.8M1573.6,322.1V328.8M1575.2,322.1V328.8M1576.9,322.1V328.8M1578.5,322.1V328.8M1580.1,322.1V328.8M1581.8,322.1V328.8M1583.4,322.1V328.8" stroke="#9a9b99" stroke-width="0.45"/>
<path d="M1569.6,321.6V319.2M1572.8,321.6V319.2M1576.1,321.6V319.2M1579.3,321.6V319.2M1582.6,321.6V319.2" stroke="#6c6d6b" stroke-width="0.9"/>
<path d="M1380.0,352.5L1380.0,338.0" fill="none" stroke="#6f7072" stroke-width="0.6"/>
<path d="M1377.8,353.1L1380.0,349.1L1382.2,353.1Z" fill="#4f5052"/>
<path d="M1411.2,375.0L1411.2,340.5" fill="none" stroke="#6f7072" stroke-width="0.6"/>
<path d="M1409.0,375.6L1411.2,371.6L1413.5,375.6Z" fill="#4f5052"/>
<path d="M1381.2,297.5L1381.2,277.5" fill="none" stroke="#6f7072" stroke-width="0.6"/>
<path d="M1379.0,298.1L1381.2,294.1L1383.5,298.1Z" fill="#4f5052"/>
<path d="M1452.5,313.0L1452.5,287.5" fill="none" stroke="#6f7072" stroke-width="0.6"/>
<path d="M1450.3,313.6L1452.5,309.6L1454.7,313.6Z" fill="#4f5052"/>
<path d="M1523.8,317.5L1523.8,286.2" fill="none" stroke="#6f7072" stroke-width="0.6"/>
<path d="M1521.5,318.1L1523.8,314.1L1526.0,318.1Z" fill="#4f5052"/>
<path d="M1562.5,318.8L1562.5,290.0" fill="none" stroke="#6f7072" stroke-width="0.6"/>
<path d="M1560.3,319.4L1562.5,315.4L1564.7,319.4Z" fill="#4f5052"/>
<path d="M1412.5,380.0L1412.5,341.2" fill="none" stroke="#6f7072" stroke-width="0.6"/>
<path d="M1410.3,380.6L1412.5,376.6L1414.7,380.6Z" fill="#4f5052"/>
<polygon points="1306.5,357.5 1442.5,391.8 1442.5,441.0 1412.5,448.8 1306.5,413.8" fill="#5f2e1f"/>
<path d="M1306.5,357.5L1442.5,391.8" fill="none" stroke="#85868e" stroke-width="1.0"/>
<path d="M1442.5,391.8L1442.5,441.0" fill="none" stroke="#4a2216" stroke-width="0.8"/>
<path d="M1306.5,357.5L1306.5,413.8L1412.5,448.8" fill="none" stroke="#4a2216" stroke-width="0.6"/>
<path d="M1306.5,385.0L1442.5,421.0" fill="none" stroke="#5a2818" stroke-width="0.5"/>
<polygon points="1315.0,401.2 1328.8,400.0 1328.8,420.0 1315.0,422.0" fill="#80594d" stroke="#77777a" stroke-width="0.5"/>
<path d="M1343.2,391.2V377.2" stroke="#1010c0" stroke-width="0.9"/><path d="M1343.2,391.2L1335.2,393.8" stroke="#c01010" stroke-width="1.1"/><path d="M1343.2,391.2L1353.2,393.8" stroke="#10b010" stroke-width="1.1"/>
</svg><!--/BUILDING-->
<div class="abs" style="left:941px;top:37px;width:32px;height:32px;background:#3a3a3a;"></div>
<svg class="abs" style="left:941px;top:37px;width:32px;height:32px" viewBox="941 37 32 32"><path d="M948.7,50V44.7H954M960,44.7H965.3V50M965.3,56V61.3H960M954,61.3H948.7V56" fill="none" stroke="#b8b8b8" stroke-width="1.4"/><path d="M957,47.9L961.4,50.4V55.6L957,58.1L952.6,55.6V50.4Z" fill="#a0a0a0"/></svg>
<svg class="abs" style="left:1670px;top:72px;width:100px;height:95px" viewBox="1670 72 100 95">
<g stroke="#2c2c2c" stroke-width="1" stroke-linejoin="round">
<path d="M1716.7,81.5L1679.2,86.7L1721.6,93.7L1757.6,86Z" fill="#a6a6a6"/>
<path d="M1679.2,86.7L1721.6,93.7L1721.6,157.4L1684.1,135.7Z" fill="#a6a6a6"/>
<path d="M1721.6,93.7L1757.6,86L1753.1,133.6L1721.6,157.4Z" fill="#a4a4a4"/>
</g>
<text transform="matrix(0.70,0.22,0.02,1.55,1688,123.6)" font-size="13" fill="#6f6f6f" font-family="Liberation Sans,sans-serif">Слева</text>
<text transform="matrix(0.55,-0.30,0,1.6,1730.5,130.6)" font-size="13" fill="#6f6f6f" font-family="Liberation Sans,sans-serif">Сзади</text>
</svg>
<svg class="abs" style="left:940px;top:598px;width:102px;height:102px" viewBox="940 598 102 102">
<circle cx="991" cy="649" r="46.5" fill="#191919"/>
<path d="M991,645V626" stroke="#0000a8" stroke-width="2"/><path d="M991,620.5L993.4,629H988.6Z" fill="#0000a8"/>
<path d="M988,650L977,654" stroke="#a00000" stroke-width="1.6"/><path d="M970.5,656L977,651.2L978.6,655.8Z" fill="#a00000"/>
<path d="M994,650L1007,654" stroke="#00a000" stroke-width="1.6"/><path d="M1014.8,656.2L1005.5,656L1007.3,651Z" fill="#00a000"/>
<circle cx="991" cy="649" r="4.4" fill="#8a8a8a"/><circle cx="991" cy="649" r="2.6" fill="#9a9a9a"/>
<text x="990.7" y="614.6" font-size="10.5" fill="#0000a8" font-family="Liberation Sans,sans-serif">Z</text>
<text x="962.6" y="659.8" font-size="10.5" fill="#a00000" font-family="Liberation Sans,sans-serif">X</text>
<text x="1021" y="657.6" font-size="10.5" fill="#00a000" font-family="Liberation Sans,sans-serif">Y</text>
</svg>
</div>

<!-- RIGHT TOOLBAR -->
<div id="rtool">
<div class="abs" style="left:1794px;top:37px;width:36px;height:740px;background:#3a3a3a;"></div>
<div class="abs" style="left:1794px;top:129px;width:36px;height:1.4px;background:#222;"></div>
<div class="abs" style="left:1794px;top:398px;width:36px;height:1.4px;background:#222;"></div>
<div class="abs" style="left:1794px;top:447px;width:36px;height:1.4px;background:#222;"></div>
<div class="abs" style="left:1794px;top:628.5px;width:36px;height:1.4px;background:#222;"></div>
<div class="abs" style="left:1794px;top:721px;width:36px;height:1.4px;background:#222;"></div>
<div class="abs" style="left:1796px;top:637px;width:32px;height:32px;background:#5c5c5c;"></div>
<div class="abs" style="left:1796px;top:681px;width:32px;height:32px;background:#5c5c5c;"></div>
<svg class="abs" style="left:1794px;top:37px;width:36px;height:740px" viewBox="1794 37 36 740"><g fill="none" stroke="#a0a0a0" stroke-width="1.3" stroke-linejoin="round"><path d="M1806,67.6H1804.8A4.2,4.2 0 0 1 1804.6,59.3A5,5 0 0 1 1808.4,53.2A5.6,5.6 0 0 1 1818.2,54.8A4.6,4.6 0 0 1 1821.6,61.8A3.6,3.6 0 0 1 1819.2,67.6H1817.6M1812.3,57V73.2M1812.3,66.4L1807.6,61.8M1812.3,65L1816.6,60.6"/></g><g fill="none" stroke="#a0a0a0" stroke-width="1.3" stroke-linejoin="round"><path d="M1810,111H1799.6V92.9H1822.4V100.5M1804,111V113.5L1807.5,113.6"/><path d="M1810.2,105.5V102H1813.7M1820.6,102H1824.2V105.5M1824.2,113.5V117.2H1820.6M1813.7,117.2H1810.2V113.5" stroke-width="1.2"/></g><path d="M1817.2,104.7L1821.4,107.1V111.9L1817.2,114.3L1813,111.9V107.1Z" fill="#a0a0a0"/><g fill="none" stroke="#a0a0a0" stroke-width="1.3" stroke-linejoin="round"><rect x="1802.2" y="149.8" width="19.4" height="7.8"/><path d="M1805,157.4V154.5M1807.4,157.4V155.3M1809.8,157.4V154.5M1812.2,157.4V155.3M1814.6,157.4V154.5M1817,157.4V155.3M1819.2,157.4V154.5" stroke-width="1"/></g><path d="M1798,164.2L1801.8,168.4H1798Z" fill="#a0a0a0"/><g fill="none" stroke="#a0a0a0" stroke-width="1.3" stroke-linejoin="round" stroke-width="1.2"><path d="M1798.8,201L1808.5,194.2H1825.5L1815.8,201Z"/></g><path d="M1808.2,192L1816.3,184.6V203.4L1808.2,211.2Z" fill="#a0a0a0" opacity="0.95"/><g fill="none" stroke="#a0a0a0" stroke-width="1.3" stroke-linejoin="round" stroke-width="1.1"><path d="M1800.4,236.4L1806.6,231H1823.8V246.4L1817.4,252.4H1800.4ZM1800.4,236.4H1817.4V252.4M1817.4,236.4L1823.8,231M1806.6,231V246.4H1823.8M1806.6,246.4L1800.4,252.4"/></g><path d="M1809,236.4L1814.4,231.4V247L1809,252.2Z" fill="#a0a0a0"/><g fill="none" stroke="#a0a0a0" stroke-width="1.3" stroke-linejoin="round" stroke-width="1.3"><path d="M1798.6,280.5L1803,276H1826V292H1798.6Z"/><path d="M1798.6,295.8H1826.4" stroke-width="2"/><path d="M1811.5,276V292M1798.6,284.3H1826M1819,284.3V289" stroke-width="1" stroke-dasharray="3 1.2 1 1.2"/></g><g fill="none" stroke="#a0a0a0" stroke-width="1.3" stroke-linejoin="round" stroke-width="1.6"><circle cx="1812" cy="330.2" r="8"/><path d="M1812,319V322.4M1812,338V341.4M1800.8,330.2H1804.2M1819.8,330.2H1823.2"/></g><circle cx="1812" cy="330.2" r="4" fill="#a0a0a0"/><g fill="none" stroke="#a0a0a0" stroke-width="1.3" stroke-linejoin="round" stroke-width="1.2"><circle cx="1812" cy="374" r="12.4"/><path d="M1807.3,381.8V367.5Q1810.5,366 1813,367.7Q1815.5,369.3 1818.6,367.8V375Q1815.5,376.6 1813,375Q1810.5,373.4 1807.3,374.9" stroke-width="1.4"/></g><g fill="none" stroke="#a0a0a0" stroke-width="1.1"><path d="M1798.9,426.7L1826.3,411.3M1798.9,435.6L1825.7,420.5M1800,421.6L1817.1,431.7M1807.6,416.2L1825.4,425.8"/></g><text x="1799" y="420" font-size="5.2" fill="#a0a0a0" font-family="Liberation Sans,sans-serif">1</text><text x="1808" y="414" font-size="5.2" fill="#a0a0a0" font-family="Liberation Sans,sans-serif">2</text><rect x="1800.6" y="460.4" width="23" height="23.2" fill="none" stroke="#a0a0a0" stroke-width="1.1" stroke-dasharray="2.2 2.2"/><g fill="none" stroke="#a0a0a0" stroke-width="1.3" stroke-linejoin="round" stroke-width="1.1"><path d="M1812,465.6L1817.6,468.6V475.2L1812,478.4L1806.4,475.2V468.6ZM1806.4,468.6L1812,471.8L1817.6,468.6M1812,471.8V478.4"/></g><rect x="1800.6" y="504.4" width="23" height="23.2" fill="none" stroke="#a0a0a0" stroke-width="1.1" stroke-dasharray="2.2 2.2"/><g fill="none" stroke="#a0a0a0" stroke-width="1.3" stroke-linejoin="round" stroke-width="1.3"><path d="M1804.6,516Q1812,508.6 1819.4,516Q1812,523.4 1804.6,516Z"/></g><circle cx="1812" cy="516" r="2.3" fill="#a0a0a0"/><rect x="1800.6" y="548.4" width="23" height="23.2" fill="none" stroke="#a0a0a0" stroke-width="1.1" stroke-dasharray="2.2 2.2"/><g fill="none" stroke="#a0a0a0" stroke-width="1.3" stroke-linejoin="round" stroke-width="1.3"><path d="M1804.6,560Q1812,552.6 1819.4,560Q1812,567.4 1804.6,560Z"/><path d="M1805.5,554.5L1818.6,565.6" stroke-width="1.5"/></g><circle cx="1812" cy="560" r="2.3" fill="#a0a0a0"/><rect x="1800.6" y="592.4" width="23" height="23.2" fill="none" stroke="#a0a0a0" stroke-width="1.1" stroke-dasharray="2.2 2.2"/><rect x="1810" y="602" width="16.4" height="16.4" fill="#a0a0a0"/><path d="M1813.6,605.6L1822.8,614.8M1822.8,605.6L1813.6,614.8" stroke="#2e2e2e" stroke-width="1.3"/><path d="M1802,645L1812,649V663.7L1803.1,657Z" fill="#9c9c9c"/><path d="M1812,649L1822,645L1821.4,656.4L1812,663.7Z" fill="#6c6c6c"/><path d="M1802,645L1811.4,643L1822,645L1812,649Z" fill="#767676"/><path d="M1802,645L1811.4,643L1822,645L1821.4,656.4L1812,663.7L1803.1,657ZM1802,645L1812,649L1822,645" fill="none" stroke="#9c9c9c" stroke-width="1.1" stroke-linejoin="round"/><g fill="none" stroke="#a0a0a0" stroke-width="1.5"><ellipse cx="1812" cy="697" rx="11.6" ry="5.8"/><ellipse cx="1812" cy="697" rx="4.8" ry="10.6"/><path d="M1812,694V698L1809.2,700.8M1812,698L1814.8,700.8" stroke-width="0.9" stroke="#b8b8b8"/></g></svg>
</div>

<div class="abs" style="left:926.4px;top:456px;width:1.7px;height:40px;background:#2a7f9c;"></div>
<!-- DIALOG -->
<div id="dialog" class="abs" style="left:725px;top:291px;width:378px;height:199.5px;background:#fff;box-shadow:0 3px 7px rgba(0,0,0,.32),0 1px 3px rgba(0,0,0,.22);"></div>
<div class="abs" style="left:725px;top:291px;width:378px;height:43.5px;background:#545454;"></div>
<span class="t" id="tx-dt" style="left:732.5px;top:305.6px;font-size:13.5px;font-weight:bold;color:#fff;letter-spacing:-0.1px;">Добавить справочник</span>
<div class="abs" style="left:741px;top:354.5px;width:341.5px;height:35px;border:2px solid #2a86a6;border-radius:5px;"></div>
<div class="abs" style="left:752px;top:353px;width:172px;height:5px;background:#fff;"></div>
<span class="t" id="tx-lbl" style="left:757px;top:347.5px;font-size:12px;color:#3a3a3a;letter-spacing:0.26px;">Наименование справочника</span>
<span class="t" id="tx-inp" style="left:757px;top:365.5px;font-size:16px;color:#111;letter-spacing:0.39px;">Мой справочник</span>
<div class="abs" style="left:883.5px;top:364.5px;width:1px;height:18px;background:#111;"></div>
<div class="abs" style="left:861px;top:434px;width:107.5px;height:35.5px;background:#c3c3c3;border-radius:3px;box-shadow:0 2px 3px rgba(0,0,0,.35);"></div>
<div class="abs" style="left:977px;top:434px;width:108px;height:35.5px;background:#3b8fae;border-radius:3px;box-shadow:0 2px 3px rgba(0,0,0,.35);"></div>
<span class="t" id="tx-b1" style="left:878.5px;top:443.8px;font-size:14px;color:#484848;letter-spacing:1.25px;">Отменить</span>
<span class="t" id="tx-b2" style="left:994px;top:443.8px;font-size:14px;font-weight:bold;color:#fff;letter-spacing:0.9px;">Добавить</span>

<svg class="abs" style="left:1072.1px;top:300.7px;width:25px;height:25px;" viewBox="0 0 24 24"><path fill="#fff" d="M19,6.41L17.59,5L12,10.59L6.41,5L5,6.41L10.59,12L5,17.59L6.41,19L12,13.41L17.59,19L19,17.59L13.41,12L19,6.41Z"/></svg>
<!-- EDGES -->

<div class="abs" style="left:1830px;top:0;width:3px;height:786px;background:linear-gradient(#a9adb0 0,#a0a3a6 8%,#6d6f70 25%,#585858 50%,#3c3c3c 75%,#2a2a2a 100%);"></div>
<div class="abs" style="left:0;top:784.3px;width:1833px;height:1.7px;background:#0a0a0a;"></div>
<div class="abs" style="left:294.4px;top:783.9px;width:1166.6px;height:2.1px;background:#27467a;"></div>
</body>
</html>
